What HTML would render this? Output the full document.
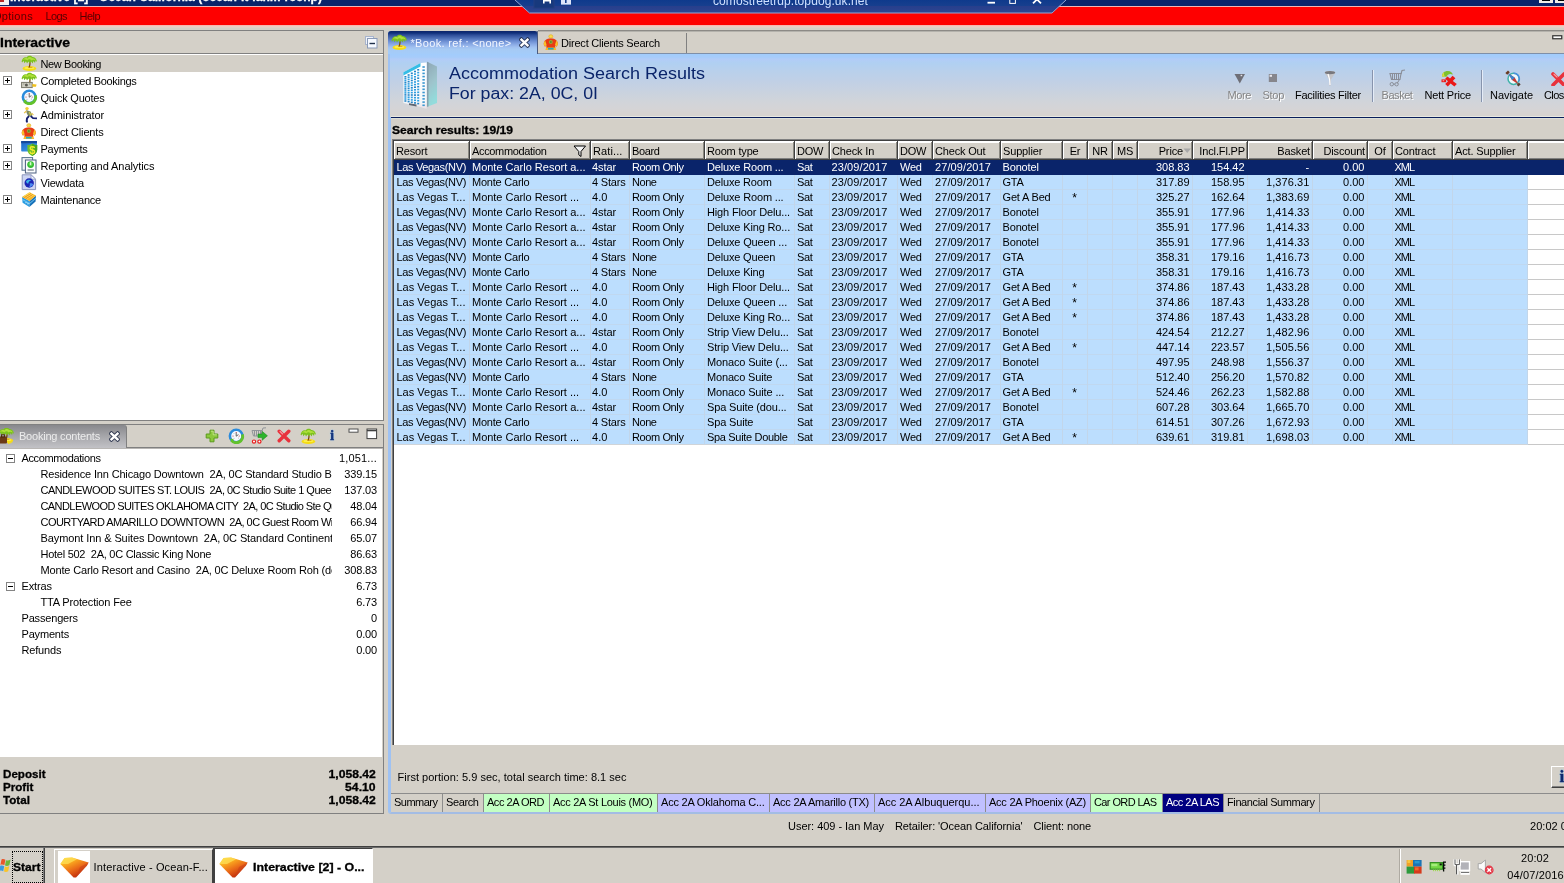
<!DOCTYPE html>
<html><head><meta charset="utf-8"><title>Interactive</title>
<style>
html,body{margin:0;padding:0;}
body{width:1564px;height:883px;overflow:hidden;position:relative;background:#d4d0c8;font-family:"Liberation Sans",sans-serif;font-size:11px;}
div,span.t,svg{position:absolute;}
span.t{white-space:pre;}
#w{left:0;top:0;width:1564px;height:883px;overflow:hidden;will-change:transform;}
div{box-sizing:border-box;}
</style></head><body><div id="w">
<div style="left:0px;top:0px;width:1564px;height:6px;background:#0a246a;"></div>
<div style="left:0px;top:6px;width:1564px;height:1px;background:#f0b4b4;"></div>
<div style="left:0px;top:7px;width:1564px;height:18px;background:#fe0000;"></div>
<div style="left:0px;top:25px;width:1564px;height:1px;background:#f6b8b0;"></div>
<div style="left:0px;top:26px;width:1564px;height:1px;background:#ecccc4;"></div>
<div style="left:0px;top:27px;width:1564px;height:1px;background:#dfd0c8;"></div>
<div style="left:0px;top:0px;width:9px;height:5px;background:#f4f0f0;"></div>
<div style="left:0px;top:0px;width:4px;height:2px;background:#b82828;"></div>
<div style="left:10px;top:0;width:330px;height:5px;overflow:hidden">
<span class="t" style="top:-12.00px;font-size:13px;line-height:17px;color:#fff;font-weight:bold;-webkit-text-stroke:0.3px #fff;left:0px;transform:scaleX(0.9268);transform-origin:0 0;">Interactive [2] - Ocean California (ocean-it-ianm-rconp)</span>
</div>
<div style="left:1539px;top:0px;width:14px;height:3px;background:#f0eee8;"></div>
<div style="left:1542px;top:0px;width:8px;height:1px;background:#000;"></div>
<div style="left:1555px;top:0px;width:9px;height:3px;background:#f0eee8;"></div>
<div style="left:1558px;top:0px;width:6px;height:1px;background:#000;"></div>
<svg style="left:510px;top:0" width="562" height="15" viewBox="0 0 562 15"><defs><linearGradient id="rg" x1="0" y1="0" x2="0" y2="1"><stop offset="0" stop-color="#0f3a8c"/><stop offset="0.45" stop-color="#173f8e"/><stop offset="0.5" stop-color="#283f8c"/><stop offset="1" stop-color="#2c4592"/></linearGradient></defs><path d="M5 0 L19.5 13 L542 13 L556 0Z" fill="url(#rg)"/><path d="M5 0 L19.5 13 L542 13 L556 0" fill="none" stroke="#93a4d4" stroke-width="1"/><rect x="24" y="-2" width="20" height="10" fill="#17397d" stroke="#243f80" stroke-width="1"/><path d="M33 0 h8 v3.5 h-1.6 v-2 h-4.8 v2 h-1.6z" fill="#fff"/><rect x="51" y="0" width="10" height="4.6" fill="#dfe6fa"/><rect x="55" y="0" width="1.6" height="3" fill="#173f8e"/><rect x="477.5" y="1.8" width="7.5" height="1.8" fill="#fff"/><rect x="499.8" y="-2" width="5.6" height="5.4" fill="none" stroke="#fff" stroke-width="1"/><path d="M523 3.4 L527 -0.6 L531 3.4" fill="none" stroke="#fff" stroke-width="1.8"/></svg>
<div style="left:700px;top:0;width:180px;height:12px;overflow:hidden">
<span class="t" style="top:-7.00px;font-size:12px;line-height:16px;color:#cfe0ff;letter-spacing:0.083px;left:13px;">comostreetrdp.topdog.uk.net</span>
</div>
<span class="t" style="top:9.00px;font-size:11px;line-height:14px;color:#560000;letter-spacing:0.297px;left:-7px;">Options</span>
<span class="t" style="top:9.00px;font-size:11px;line-height:14px;color:#560000;letter-spacing:-0.590px;left:45.5px;">Logs</span>
<span class="t" style="top:9.00px;font-size:11px;line-height:14px;color:#560000;letter-spacing:-0.531px;left:79.5px;">Help</span>
<div style="left:0px;top:30px;width:384px;height:1px;background:#808080;"></div>
<div style="left:383px;top:30px;width:1px;height:391px;background:#808080;"></div>
<div style="left:0px;top:53px;width:383px;height:1px;background:#808080;"></div>
<span class="t" style="top:35.00px;font-size:12px;line-height:16px;color:#000;font-weight:bold;-webkit-text-stroke:0.3px #000;left:0px;transform:scaleX(1.1661);transform-origin:0 0;">Interactive</span>
<svg style="left:365px;top:36px;" width="13" height="13" viewBox="0 0 13 13"><rect x="0.5" y="0.5" width="8" height="8" fill="#eef2fa" stroke="#a8b4cc"/><rect x="2.5" y="2.5" width="9.5" height="9.5" fill="#f6f9ff" stroke="#8a9ab8"/><path d="M4.5 7.5 h5.5" stroke="#20304a" stroke-width="1.4"/></svg>
<div style="left:0px;top:54px;width:383px;height:366px;background:#fff;"></div>
<div style="left:0px;top:55px;width:383px;height:17px;background:#d4d0c8;"></div>
<div style="left:0px;top:420px;width:384px;height:1px;background:#808080;"></div>
<svg style="left:21px;top:55px;" width="16" height="16" viewBox="0 0 16 16"><g><ellipse cx="8.4" cy="13.5" rx="6.8" ry="2.4" fill="#f6dc12"/><ellipse cx="8.4" cy="12.9" rx="5" ry="1.2" fill="#fbee4c"/><path d="M7 12.4 h4.4" stroke="#d89a1c" stroke-width="0.9"/><path d="M8.9 6.5 C9.2 8.5 8.9 10.5 8.3 12.2" stroke="#7a4a16" stroke-width="1.3" fill="none"/><path d="M0.6 6.6 C1 4 3 1.8 5.6 2.4 C6.6 0.4 10 0 11.4 2 C13.8 1.6 15.8 4 16 7 L14.6 5.6 L14 8 L12.6 6 L11.6 8.4 L10.2 6.4 L8.8 8.6 L7.4 6.4 L6 8.6 L5 6.2 L3.4 8.2 L2.6 5.8 L1.2 7.4Z" fill="#7cc21c"/><path d="M2 5 C3 3 5 2.6 6.6 3.4 C7.4 1.6 10 1.4 11 3 C12.6 2.8 14 4 14.8 5.6 C13 4.4 11.6 4.4 10.4 5.4 C9.4 4 7.4 4 6.4 5.4 C5 4.4 3.4 4.4 2 5Z" fill="#aede3a"/></g></svg>
<span class="t" style="top:56.50px;font-size:11px;line-height:14px;color:#000;letter-spacing:-0.393px;left:40.5px;">New Booking</span>
<svg style="left:3px;top:76px;" width="9" height="9" viewBox="0 0 9 9"><rect x="0.5" y="0.5" width="8" height="8" fill="#fff" stroke="#848484"/><path d="M2 4.5h5M4.5 2v5" stroke="#000" stroke-width="1"/></svg>
<svg style="left:21px;top:72px;" width="17" height="17" viewBox="0 0 17 17"><path d="M8.9 6.5 C9.2 8.5 8.9 10.5 8.3 12.2" stroke="#7a4a16" stroke-width="1.3" fill="none"/><path d="M0.6 6.6 C1 4 3 1.8 5.6 2.4 C6.6 0.4 10 0 11.4 2 C13.8 1.6 15.8 4 16 7 L14.6 5.6 L14 8 L12.6 6 L11.6 8.4 L10.2 6.4 L8.8 8.6 L7.4 6.4 L6 8.6 L5 6.2 L3.4 8.2 L2.6 5.8 L1.2 7.4Z" fill="#7cc21c"/><path d="M2 5 C3 3 5 2.6 6.6 3.4 C7.4 1.6 10 1.4 11 3 C12.6 2.8 14 4 14.8 5.6 C13 4.4 11.6 4.4 10.4 5.4 C9.4 4 7.4 4 6.4 5.4 C5 4.4 3.4 4.4 2 5Z" fill="#aede3a"/><rect x="0.6" y="10.4" width="10.6" height="5.2" fill="#d0d0c4" stroke="#77776a" stroke-width="1"/><circle cx="5.4" cy="13" r="1.5" fill="#5a5a52"/><path d="M2.2 12 h1.2 M8 12 h1.4" stroke="#77776a" stroke-width="0.8"/><path d="M11.4 12 L15.6 12.6 L15 14.8 L11.4 14.8Z" fill="#f2c21c"/></svg>
<span class="t" style="top:73.50px;font-size:11px;line-height:14px;color:#000;letter-spacing:-0.306px;left:40.5px;">Completed Bookings</span>
<svg style="left:21px;top:89px;" width="17" height="17" viewBox="0 0 17 17"><circle cx="8.2" cy="8" r="6.3" fill="#f6f9ff" stroke="#2b8bdc" stroke-width="2.6"/><path d="M14.4 6.4 A6.4 6.4 0 0 1 3.4 12.4" fill="none" stroke="#62c22c" stroke-width="2.9"/><path d="M2.4 10.6 l3.4 0.6 l-2.6 3z" fill="#62c22c"/><path d="M8.2 8.2 L8.2 4.6 M8.2 8.2 L10.4 6.6" stroke="#555" stroke-width="0.9" fill="none"/><circle cx="5" cy="8" r="0.55" fill="#b33"/><circle cx="11.2" cy="8" r="0.55" fill="#b33"/><circle cx="8.2" cy="4.4" r="0.5" fill="#b33"/><circle cx="6" cy="5.6" r="0.45" fill="#888"/><circle cx="10.4" cy="10" r="0.45" fill="#888"/><circle cx="6" cy="10.2" r="0.45" fill="#888"/></svg>
<span class="t" style="top:90.50px;font-size:11px;line-height:14px;color:#000;letter-spacing:-0.220px;left:40.5px;">Quick Quotes</span>
<svg style="left:3px;top:110px;" width="9" height="9" viewBox="0 0 9 9"><rect x="0.5" y="0.5" width="8" height="8" fill="#fff" stroke="#848484"/><path d="M2 4.5h5M4.5 2v5" stroke="#000" stroke-width="1"/></svg>
<svg style="left:21px;top:106px;" width="17" height="17" viewBox="0 0 17 17"><circle cx="6" cy="2.6" r="1.7" fill="#f2cc3a"/><path d="M5.2 4 L9.6 5.4 L11.4 9.6 L7.4 10.6 L5.6 7Z" fill="#7f8a62"/><path d="M8.6 5.6 L11 9.4 L9.4 9.8 L7.6 6.4Z" fill="#c9c24a"/><path d="M5.4 5 L3.2 7.2" stroke="#e8c040" stroke-width="1.2"/><path d="M10.6 7.2 L12.4 8.8" stroke="#e8c040" stroke-width="1.1"/><path d="M8 10 L6 12.4 L5.6 15.6" stroke="#16206e" stroke-width="1.9" fill="none" stroke-linejoin="round"/><path d="M5 15.6 h1.8" stroke="#16206e" stroke-width="1.6"/><path d="M9.6 10 L12 12.2 L16 12.4" stroke="#16206e" stroke-width="1.7" fill="none" stroke-linejoin="round"/></svg>
<span class="t" style="top:107.50px;font-size:11px;line-height:14px;color:#000;letter-spacing:-0.100px;left:40.5px;">Administrator</span>
<svg style="left:21px;top:123px;" width="17" height="17" viewBox="0 0 17 17"><ellipse cx="7.8" cy="2.4" rx="2" ry="1.7" fill="#f8dc4a" stroke="#e8b02a" stroke-width="0.7"/><path d="M0.8 10.4 C0.6 6.2 3.6 4.4 7.8 4.4 C12 4.4 15 6.2 14.8 10.4 L13.6 12.8 L12.2 11.2 L12.2 14.2 L3.4 14.2 L3.4 11.2 L2 12.8Z" fill="#e83c14"/><path d="M0.8 10.4 C0.7 8.6 1.2 7.4 2.2 6.4 L3.6 10.8 L2 12.8Z M14.8 10.4 C14.9 8.6 14.4 7.4 13.4 6.4 L12 10.8 L13.6 12.8Z" fill="#f8c02a"/><circle cx="7.8" cy="8" r="2" fill="#98a83a"/><circle cx="7.8" cy="8" r="1" fill="#5a8a2a"/><path d="M3.2 13.6 h9.2 l0.8 2.4 h-10.8z" fill="#f8b82a"/><rect x="5" y="13.8" width="5.6" height="1.8" fill="#26a8c0"/></svg>
<span class="t" style="top:124.50px;font-size:11px;line-height:14px;color:#000;letter-spacing:-0.172px;left:40.5px;">Direct Clients</span>
<svg style="left:3px;top:144px;" width="9" height="9" viewBox="0 0 9 9"><rect x="0.5" y="0.5" width="8" height="8" fill="#fff" stroke="#848484"/><path d="M2 4.5h5M4.5 2v5" stroke="#000" stroke-width="1"/></svg>
<svg style="left:21px;top:140px;" width="17" height="17" viewBox="0 0 17 17"><defs><linearGradient id="pg" x1="0" y1="0" x2="1" y2="1"><stop offset="0" stop-color="#1a62c4"/><stop offset="1" stop-color="#44a8f0"/></linearGradient></defs><rect x="0.2" y="1" width="15.8" height="10.6" rx="0.8" fill="url(#pg)"/><rect x="0.2" y="1" width="15.8" height="2.2" fill="#154a9c"/><path d="M11.2 3.4 C12.6 4.6 14.4 5 16.2 5 L16.2 10 C16 13 13.6 15 11.2 16 C8.8 15 6.6 13 6.4 10 L6.4 5 C8.2 5 9.8 4.6 11.2 3.4Z" fill="#6cc02c"/><path d="M11.2 3.4 C12.6 4.6 14.4 5 16.2 5 L16.2 10 C16 13 13.6 15 11.2 16Z" fill="#4aa420"/><text x="11.3" y="13.8" font-family="Liberation Sans" font-weight="bold" font-size="11" fill="#f4ec2a" text-anchor="middle">$</text></svg>
<span class="t" style="top:141.50px;font-size:11px;line-height:14px;color:#000;letter-spacing:-0.240px;left:40.5px;">Payments</span>
<svg style="left:3px;top:161px;" width="9" height="9" viewBox="0 0 9 9"><rect x="0.5" y="0.5" width="8" height="8" fill="#fff" stroke="#848484"/><path d="M2 4.5h5M4.5 2v5" stroke="#000" stroke-width="1"/></svg>
<svg style="left:21px;top:157px;" width="17" height="17" viewBox="0 0 17 17"><rect x="1" y="0.6" width="10.6" height="12.6" fill="#f2f5f8" stroke="#52708a" stroke-width="1"/><rect x="4.4" y="3" width="10.6" height="13" fill="#fbfdfd" stroke="#4a5e80" stroke-width="1"/><circle cx="9.6" cy="7.6" r="3.4" fill="#34bc34"/><circle cx="9.6" cy="7" r="2" fill="#6ade5a"/><path d="M9.6 5.2 v2.8" stroke="#f0fff0" stroke-width="0.9"/><path d="M6.6 13 h6.2" stroke="#3a4a5a" stroke-width="0.9"/></svg>
<span class="t" style="top:158.50px;font-size:11px;line-height:14px;color:#000;letter-spacing:-0.069px;left:40.5px;">Reporting and Analytics</span>
<svg style="left:21px;top:174px;" width="17" height="17" viewBox="0 0 17 17"><path d="M1.2 0.8 L10 0.8 L14.6 5.2 L14.6 15.6 L1.2 15.6Z" fill="#cdd5f2" stroke="#8a96bc" stroke-width="1"/><path d="M10 0.8 L10 5.2 L14.6 5.2Z" fill="#f2f5ff" stroke="#8a96bc" stroke-width="0.8"/><circle cx="8.2" cy="9" r="4.7" fill="#1c26b4"/><path d="M5 7.4 C6 5.6 8.6 5 10.4 6.4 C9 6.4 7.4 7.6 7.4 9.6 C6.2 9.4 5.2 8.6 5 7.4Z" fill="#3ab4e8"/><path d="M8.6 9.6 C10 9 11.6 9.4 12.2 10.6 C11.4 12.4 9.6 13.2 8 12.8 C9 12 9.2 10.8 8.6 9.6Z" fill="#4a8af0"/></svg>
<span class="t" style="top:175.50px;font-size:11px;line-height:14px;color:#000;letter-spacing:-0.195px;left:40.5px;">Viewdata</span>
<svg style="left:3px;top:195px;" width="9" height="9" viewBox="0 0 9 9"><rect x="0.5" y="0.5" width="8" height="8" fill="#fff" stroke="#848484"/><path d="M2 4.5h5M4.5 2v5" stroke="#000" stroke-width="1"/></svg>
<svg style="left:21px;top:191px;" width="17" height="17" viewBox="0 0 17 17"><path d="M1 6 L8.6 10 L8.4 16 L1.6 11.8Z" fill="#2a9ce0"/><path d="M8.6 10 L15 4.6 L14.6 10.4 L8.4 16Z" fill="#1670b8"/><path d="M1 6 L8.4 1.2 L15 4.6 L8.6 10Z" fill="#f6b42a"/><path d="M2.8 5.6 L9.4 1.8 M4.4 6.6 L11 2.8 M6.2 7.6 L12.8 3.8" stroke="#fbe45a" stroke-width="1"/><path d="M3.4 6.6 L10 2.6 M5.2 7.6 L11.8 3.6" stroke="#e8841c" stroke-width="0.7"/><path d="M1.2 8.4 L8.6 12.6 L14.8 7.2" stroke="#7cd0f8" stroke-width="0.9" fill="none"/><circle cx="5" cy="11.6" r="0.7" fill="#d8f0ff"/><circle cx="7" cy="12.8" r="0.7" fill="#d8f0ff"/></svg>
<span class="t" style="top:192.50px;font-size:11px;line-height:14px;color:#000;letter-spacing:-0.227px;left:40.5px;">Maintenance</span>
<div style="left:0px;top:424px;width:384px;height:1px;background:#808080;"></div>
<div style="left:383px;top:424px;width:1px;height:390px;background:#808080;"></div>
<div style="left:0px;top:447px;width:383px;height:1px;background:#808080;"></div>
<div style="left:0;top:425px;width:127px;height:24px;background:linear-gradient(#88888c,#a8a8ac 50%,#c4c4c8);border-right:1px solid #808080;border-radius:0 3px 0 0"></div>
<svg style="left:-3px;top:428px;" width="18" height="17" viewBox="0 0 18 17"><g transform="translate(1,-1)"><g><ellipse cx="8.4" cy="13.5" rx="6.8" ry="2.4" fill="#f6dc12"/><ellipse cx="8.4" cy="12.9" rx="5" ry="1.2" fill="#fbee4c"/><path d="M7 12.4 h4.4" stroke="#d89a1c" stroke-width="0.9"/><path d="M8.9 6.5 C9.2 8.5 8.9 10.5 8.3 12.2" stroke="#7a4a16" stroke-width="1.3" fill="none"/><path d="M0.6 6.6 C1 4 3 1.8 5.6 2.4 C6.6 0.4 10 0 11.4 2 C13.8 1.6 15.8 4 16 7 L14.6 5.6 L14 8 L12.6 6 L11.6 8.4 L10.2 6.4 L8.8 8.6 L7.4 6.4 L6 8.6 L5 6.2 L3.4 8.2 L2.6 5.8 L1.2 7.4Z" fill="#7cc21c"/><path d="M2 5 C3 3 5 2.6 6.6 3.4 C7.4 1.6 10 1.4 11 3 C12.6 2.8 14 4 14.8 5.6 C13 4.4 11.6 4.4 10.4 5.4 C9.4 4 7.4 4 6.4 5.4 C5 4.4 3.4 4.4 2 5Z" fill="#aede3a"/></g></g><rect x="2" y="8.5" width="8" height="7" rx="1" fill="#6b3a16"/><rect x="4.5" y="6.8" width="3" height="2.2" fill="none" stroke="#4a2408" stroke-width="0.9"/><path d="M11 14 L16 14.5 L11 16.2Z" fill="#f6dc1c"/></svg>
<span class="t" style="top:429.00px;font-size:11px;line-height:14px;color:#ececec;letter-spacing:-0.212px;left:19px;">Booking contents</span>
<svg style="left:109px;top:431px;" width="11" height="11" viewBox="0 0 11 11"><path d="M0.9 1.1 L10.1 9.9 M10.1 1.1 L0.9 9.9" stroke="#1a2440" stroke-width="4.2" stroke-linecap="butt" opacity="0.8"/><path d="M1.6 1.8 L9.4 9.2 M9.4 1.8 L1.6 9.2" stroke="#fff" stroke-width="2.4" stroke-linecap="butt"/></svg>
<svg style="left:205px;top:429px;" width="14" height="14" viewBox="0 0 14 14"><path d="M5 1.2 h4 v3.8 h3.8 v4 h-3.8 v3.8 h-4 v-3.8 h-3.8 v-4 h3.8z" fill="#8cc83c" stroke="#5a9a1c" stroke-width="1"/><path d="M5.8 2.2 h2.4 v3.6 h3.6" fill="none" stroke="#c4e88a" stroke-width="0.9"/></svg>
<svg style="left:228px;top:428px;" width="17" height="17" viewBox="0 0 17 17"><circle cx="8.2" cy="8" r="6.3" fill="#f6f9ff" stroke="#2b8bdc" stroke-width="2.6"/><path d="M14.4 6.4 A6.4 6.4 0 0 1 3.4 12.4" fill="none" stroke="#62c22c" stroke-width="2.9"/><path d="M2.4 10.6 l3.4 0.6 l-2.6 3z" fill="#62c22c"/><path d="M8.2 8.2 L8.2 4.6 M8.2 8.2 L10.4 6.6" stroke="#555" stroke-width="0.9" fill="none"/><circle cx="5" cy="8" r="0.55" fill="#b33"/><circle cx="11.2" cy="8" r="0.55" fill="#b33"/><circle cx="8.2" cy="4.4" r="0.5" fill="#b33"/><circle cx="6" cy="5.6" r="0.45" fill="#888"/><circle cx="10.4" cy="10" r="0.45" fill="#888"/><circle cx="6" cy="10.2" r="0.45" fill="#888"/></svg>
<svg style="left:251px;top:427px;" width="18" height="18" viewBox="0 0 18 18"><path d="M1 3.5 L11 3.5 L10 9 L2.5 9Z" fill="none" stroke="#909498" stroke-width="1"/><path d="M3.5 3.5 v5.5 M5.5 3.5 v5.5 M7.5 3.5 v5.5 M9.5 3.5 v5.5" stroke="#909498" stroke-width="1"/><path d="M11 4 L12 1 L15 0.8" fill="none" stroke="#909498" stroke-width="1"/><path d="M7 7 h4.2 v-2.6 l5.2 4.4 l-5.2 4.4 v-2.6 h-4.2z" fill="#2cb42c" stroke="#1c8a1c" stroke-width="0.6"/><circle cx="3" cy="14.6" r="1.6" fill="#fff" stroke="#e81c1c" stroke-width="1.2"/><circle cx="8.4" cy="14.6" r="1.6" fill="#fff" stroke="#e81c1c" stroke-width="1.2"/></svg>
<svg style="left:277px;top:429px;" width="14" height="14" viewBox="0 0 14 14"><path d="M2.2 2.2 L11.8 11.8 M11.8 2.2 L2.2 11.8" stroke="#e8323c" stroke-width="3.4" stroke-linecap="round"/><path d="M3 2.4 L5.6 5" stroke="#f8a0a8" stroke-width="1.1" stroke-linecap="round"/></svg>
<svg style="left:300px;top:428px;" width="16" height="16" viewBox="0 0 16 16"><g><ellipse cx="8.4" cy="13.5" rx="6.8" ry="2.4" fill="#f6dc12"/><ellipse cx="8.4" cy="12.9" rx="5" ry="1.2" fill="#fbee4c"/><path d="M7 12.4 h4.4" stroke="#d89a1c" stroke-width="0.9"/><path d="M8.9 6.5 C9.2 8.5 8.9 10.5 8.3 12.2" stroke="#7a4a16" stroke-width="1.3" fill="none"/><path d="M0.6 6.6 C1 4 3 1.8 5.6 2.4 C6.6 0.4 10 0 11.4 2 C13.8 1.6 15.8 4 16 7 L14.6 5.6 L14 8 L12.6 6 L11.6 8.4 L10.2 6.4 L8.8 8.6 L7.4 6.4 L6 8.6 L5 6.2 L3.4 8.2 L2.6 5.8 L1.2 7.4Z" fill="#7cc21c"/><path d="M2 5 C3 3 5 2.6 6.6 3.4 C7.4 1.6 10 1.4 11 3 C12.6 2.8 14 4 14.8 5.6 C13 4.4 11.6 4.4 10.4 5.4 C9.4 4 7.4 4 6.4 5.4 C5 4.4 3.4 4.4 2 5Z" fill="#aede3a"/></g></svg>
<span class="t" style="top:426.00px;font-size:15px;line-height:19px;color:#16357c;font-weight:bold;-webkit-text-stroke:0.3px #16357c;font-family:'Liberation Serif',serif;left:329.91px;transform:scaleX(1.0000);transform-origin:50% 0;text-shadow:0 0 2px #a8d4ff,0 0 1px #a8d4ff;">i</span>
<svg style="left:348px;top:428px;" width="12" height="6" viewBox="0 0 12 6"><rect x="1" y="1" width="9" height="3.2" fill="#fff" stroke="#505050" stroke-width="1"/></svg>
<svg style="left:366px;top:428px;" width="12" height="12" viewBox="0 0 12 12"><rect x="1" y="1" width="9.6" height="9.6" fill="#fff" stroke="#404040" stroke-width="1"/><path d="M1 2.6 h9.6" stroke="#404040" stroke-width="1.4"/></svg>
<div style="left:0px;top:448px;width:383px;height:1px;background:#b8b6b4;"></div>
<div style="left:0px;top:449px;width:382px;height:308px;background:#fff;"></div>
<svg style="left:6px;top:454px;" width="9" height="9" viewBox="0 0 9 9"><rect x="0.5" y="0.5" width="8" height="8" fill="#fff" stroke="#848484"/><path d="M2 4.5h5" stroke="#000" stroke-width="1"/></svg>
<span class="t" style="top:451.00px;font-size:11px;line-height:14px;color:#000;letter-spacing:-0.384px;left:21.5px;">Accommodations</span>
<span class="t" style="top:451.00px;font-size:11px;line-height:14px;color:#000;letter-spacing:0.162px;left:339.00px;">1,051...</span>
<div style="left:40px;top:466px;width:291.5px;height:16px;overflow:hidden">
<span class="t" style="top:1.00px;font-size:11px;line-height:14px;color:#000;letter-spacing:-0.161px;left:0.5px;">Residence Inn Chicago Downtown  2A, 0C Standard Studio B</span>
</div>
<span class="t" style="top:467.00px;font-size:11px;line-height:14px;color:#000;letter-spacing:-0.168px;left:344.35px;">339.15</span>
<div style="left:40px;top:482px;width:291.5px;height:16px;overflow:hidden">
<span class="t" style="top:1.00px;font-size:11px;line-height:14px;color:#000;letter-spacing:-0.517px;left:0.5px;">CANDLEWOOD SUITES ST. LOUIS  2A, 0C Studio Suite 1 Queen</span>
</div>
<span class="t" style="top:483.00px;font-size:11px;line-height:14px;color:#000;letter-spacing:-0.168px;left:344.35px;">137.03</span>
<div style="left:40px;top:498px;width:291.5px;height:16px;overflow:hidden">
<span class="t" style="top:1.00px;font-size:11px;line-height:14px;color:#000;letter-spacing:-0.580px;left:0.5px;">CANDLEWOOD SUITES OKLAHOMA CITY  2A, 0C Studio Ste Que</span>
</div>
<span class="t" style="top:499.00px;font-size:11px;line-height:14px;color:#000;letter-spacing:-0.165px;left:350.29px;">48.04</span>
<div style="left:40px;top:514px;width:291.5px;height:16px;overflow:hidden">
<span class="t" style="top:1.00px;font-size:11px;line-height:14px;color:#000;letter-spacing:-0.534px;left:0.5px;">COURTYARD AMARILLO DOWNTOWN  2A, 0C Guest Room Wit</span>
</div>
<span class="t" style="top:515.00px;font-size:11px;line-height:14px;color:#000;letter-spacing:-0.165px;left:350.29px;">66.94</span>
<div style="left:40px;top:530px;width:291.5px;height:16px;overflow:hidden">
<span class="t" style="top:1.00px;font-size:11px;line-height:14px;color:#000;letter-spacing:-0.095px;left:0.5px;">Baymont Inn &amp; Suites Downtown  2A, 0C Standard Continental</span>
</div>
<span class="t" style="top:531.00px;font-size:11px;line-height:14px;color:#000;letter-spacing:-0.165px;left:350.29px;">65.07</span>
<div style="left:40px;top:546px;width:291.5px;height:16px;overflow:hidden">
<span class="t" style="top:1.00px;font-size:11px;line-height:14px;color:#000;letter-spacing:-0.262px;left:0.5px;">Hotel 502  2A, 0C Classic King None</span>
</div>
<span class="t" style="top:547.00px;font-size:11px;line-height:14px;color:#000;letter-spacing:-0.165px;left:350.29px;">86.63</span>
<div style="left:40px;top:562px;width:291.5px;height:16px;overflow:hidden">
<span class="t" style="top:1.00px;font-size:11px;line-height:14px;color:#000;letter-spacing:-0.161px;left:0.5px;">Monte Carlo Resort and Casino  2A, 0C Deluxe Room Roh (do</span>
</div>
<span class="t" style="top:563.00px;font-size:11px;line-height:14px;color:#000;letter-spacing:-0.168px;left:344.35px;">308.83</span>
<svg style="left:6px;top:582px;" width="9" height="9" viewBox="0 0 9 9"><rect x="0.5" y="0.5" width="8" height="8" fill="#fff" stroke="#848484"/><path d="M2 4.5h5" stroke="#000" stroke-width="1"/></svg>
<span class="t" style="top:579.00px;font-size:11px;line-height:14px;color:#000;letter-spacing:-0.156px;left:21.5px;">Extras</span>
<span class="t" style="top:579.00px;font-size:11px;line-height:14px;color:#000;letter-spacing:-0.161px;left:356.22px;">6.73</span>
<div style="left:40px;top:594px;width:291.5px;height:16px;overflow:hidden">
<span class="t" style="top:1.00px;font-size:11px;line-height:14px;color:#000;letter-spacing:-0.157px;left:0.5px;">TTA Protection Fee</span>
</div>
<span class="t" style="top:595.00px;font-size:11px;line-height:14px;color:#000;letter-spacing:-0.161px;left:356.22px;">6.73</span>
<span class="t" style="top:611.00px;font-size:11px;line-height:14px;color:#000;letter-spacing:-0.174px;left:21.5px;">Passengers</span>
<span class="t" style="top:611.00px;font-size:11px;line-height:14px;color:#000;letter-spacing:-0.184px;left:371.06px;">0</span>
<span class="t" style="top:627.00px;font-size:11px;line-height:14px;color:#000;letter-spacing:-0.183px;left:21.5px;">Payments</span>
<span class="t" style="top:627.00px;font-size:11px;line-height:14px;color:#000;letter-spacing:-0.161px;left:356.22px;">0.00</span>
<span class="t" style="top:643.00px;font-size:11px;line-height:14px;color:#000;letter-spacing:-0.176px;left:21.5px;">Refunds</span>
<span class="t" style="top:643.00px;font-size:11px;line-height:14px;color:#000;letter-spacing:-0.161px;left:356.22px;">0.00</span>
<span class="t" style="top:767.00px;font-size:11px;line-height:14px;color:#000;font-weight:bold;-webkit-text-stroke:0.3px #000;left:2.5px;transform:scaleX(1.0550);transform-origin:0 0;">Deposit</span>
<span class="t" style="top:767.00px;font-size:11px;line-height:14px;color:#000;font-weight:bold;-webkit-text-stroke:0.3px #000;left:332.67px;transform:scaleX(1.1050);transform-origin:100% 0;">1,058.42</span>
<span class="t" style="top:780.00px;font-size:11px;line-height:14px;color:#000;font-weight:bold;-webkit-text-stroke:0.3px #000;left:2.5px;transform:scaleX(1.0550);transform-origin:0 0;">Profit</span>
<span class="t" style="top:780.00px;font-size:11px;line-height:14px;color:#000;font-weight:bold;-webkit-text-stroke:0.3px #000;left:347.97px;transform:scaleX(1.1050);transform-origin:100% 0;">54.10</span>
<span class="t" style="top:793.00px;font-size:11px;line-height:14px;color:#000;font-weight:bold;-webkit-text-stroke:0.3px #000;left:2.5px;transform:scaleX(1.0550);transform-origin:0 0;">Total</span>
<span class="t" style="top:793.00px;font-size:11px;line-height:14px;color:#000;font-weight:bold;-webkit-text-stroke:0.3px #000;left:332.67px;transform:scaleX(1.1050);transform-origin:100% 0;">1,058.42</span>
<div style="left:0px;top:813px;width:384px;height:1px;background:#808080;"></div>
<div style="left:388px;top:31px;width:1176px;height:783px;border:2px solid #9fc2f3;border-left-width:3px;border-right:none;border-top:none;border-bottom-color:#a3bce4;border-radius:3px 0 0 3px;"></div>
<div style="left:538px;top:30px;width:1026px;height:1px;background:#8c8a86;"></div>
<div style="left:538px;top:31px;width:1026px;height:1px;background:#b4b2ac;"></div>
<div style="left:537px;top:31px;width:1px;height:22px;background:#6a7890;"></div>
<div style="left:390px;top:53px;width:1174px;height:1px;background:#7f8fa8;"></div>
<div style="left:388px;top:31px;width:150px;height:23px;background:linear-gradient(#0c2468 0%,#10307c 9%,#2c4c98 17%,#4a6cb4 30%,#6a8cd0 43%,#88a8e4 57%,#a0c0f0 70%,#a6caf4 80%,#a4ccfa 100%);border-radius:3px 3px 0 0;border-right:1px solid #4a5a80"></div>
<svg style="left:391px;top:33.5px;" width="16" height="16" viewBox="0 0 16 16"><g><ellipse cx="8.4" cy="13.5" rx="6.8" ry="2.4" fill="#f6dc12"/><ellipse cx="8.4" cy="12.9" rx="5" ry="1.2" fill="#fbee4c"/><path d="M7 12.4 h4.4" stroke="#d89a1c" stroke-width="0.9"/><path d="M8.9 6.5 C9.2 8.5 8.9 10.5 8.3 12.2" stroke="#7a4a16" stroke-width="1.3" fill="none"/><path d="M0.6 6.6 C1 4 3 1.8 5.6 2.4 C6.6 0.4 10 0 11.4 2 C13.8 1.6 15.8 4 16 7 L14.6 5.6 L14 8 L12.6 6 L11.6 8.4 L10.2 6.4 L8.8 8.6 L7.4 6.4 L6 8.6 L5 6.2 L3.4 8.2 L2.6 5.8 L1.2 7.4Z" fill="#7cc21c"/><path d="M2 5 C3 3 5 2.6 6.6 3.4 C7.4 1.6 10 1.4 11 3 C12.6 2.8 14 4 14.8 5.6 C13 4.4 11.6 4.4 10.4 5.4 C9.4 4 7.4 4 6.4 5.4 C5 4.4 3.4 4.4 2 5Z" fill="#aede3a"/></g></svg>
<span class="t" style="top:36.00px;font-size:11px;line-height:14px;color:#f2f6ff;letter-spacing:0.326px;left:410.5px;">*Book. ref.: &lt;none&gt;</span>
<svg style="left:519px;top:37px;" width="11" height="11" viewBox="0 0 11 11"><path d="M0.9 1.1 L10.1 9.9 M10.1 1.1 L0.9 9.9" stroke="#1a2440" stroke-width="4.2" stroke-linecap="butt" opacity="0.8"/><path d="M1.6 1.8 L9.4 9.2 M9.4 1.8 L1.6 9.2" stroke="#fff" stroke-width="2.4" stroke-linecap="butt"/></svg>
<div style="left:686px;top:33px;width:1px;height:20px;background:#808080;"></div>
<svg style="left:543px;top:34px;" width="17" height="17" viewBox="0 0 17 17"><ellipse cx="7.8" cy="2.4" rx="2" ry="1.7" fill="#f8dc4a" stroke="#e8b02a" stroke-width="0.7"/><path d="M0.8 10.4 C0.6 6.2 3.6 4.4 7.8 4.4 C12 4.4 15 6.2 14.8 10.4 L13.6 12.8 L12.2 11.2 L12.2 14.2 L3.4 14.2 L3.4 11.2 L2 12.8Z" fill="#e83c14"/><path d="M0.8 10.4 C0.7 8.6 1.2 7.4 2.2 6.4 L3.6 10.8 L2 12.8Z M14.8 10.4 C14.9 8.6 14.4 7.4 13.4 6.4 L12 10.8 L13.6 12.8Z" fill="#f8c02a"/><circle cx="7.8" cy="8" r="2" fill="#98a83a"/><circle cx="7.8" cy="8" r="1" fill="#5a8a2a"/><path d="M3.2 13.6 h9.2 l0.8 2.4 h-10.8z" fill="#f8b82a"/><rect x="5" y="13.8" width="5.6" height="1.8" fill="#26a8c0"/></svg>
<span class="t" style="top:36.00px;font-size:11px;line-height:14px;color:#000;letter-spacing:-0.206px;left:561px;">Direct Clients Search</span>
<svg style="left:1552px;top:35px;" width="11" height="5" viewBox="0 0 11 5"><rect x="0.75" y="0.75" width="9" height="3" fill="#fff" stroke="#303030" stroke-width="1.2"/></svg>
<div style="left:390px;top:54px;width:1174px;height:63px;background:linear-gradient(#a2ccfc 0%,#a6ccfa 5%,#b2ccf8 8%,#b0d0f2 14%,#b8d0ec 26%,#c0d0e6 42%,#c8d2e0 58%,#d0d4da 74%,#d5d4d6 87%,#d6d3d0 96%)"></div>
<svg style="left:401px;top:60px;" width="38" height="52" viewBox="0 0 38 52"><defs><linearGradient id="bg1" x1="0" y1="0" x2="0.25" y2="1"><stop offset="0" stop-color="#8ea6b4"/><stop offset="0.55" stop-color="#9ec4cc"/><stop offset="1" stop-color="#92dcdc"/></linearGradient><linearGradient id="bg2" x1="0" y1="0" x2="0" y2="1"><stop offset="0" stop-color="#fff"/><stop offset="0.85" stop-color="#f4f8fb"/><stop offset="1" stop-color="#e8dde2"/></linearGradient></defs><path d="M2.4 12.3 L19.5 3 L25.6 2.4 L25.6 49 L19.5 47 L2.4 43Z" fill="url(#bg2)"/><path d="M26.2 1.8 L36 6.4 L36 43 L26.2 46.8Z" fill="url(#bg1)"/><path d="M26.2 1.8 L27.4 2.4 L27.4 46.4 L26.2 46.8Z" fill="#7d97a6"/><path d="M2.4 12.3 L19.5 3 L19.5 6.4 L2.4 15.6Z" fill="#36bde6"/><rect x="3.4" y="16.0" width="2" height="1.6" fill="#2686c8"/><rect x="3.4" y="18.0" width="2" height="1.6" fill="#2f9fe0"/><rect x="3.4" y="20.0" width="2" height="1.6" fill="#2f9fe0"/><rect x="3.4" y="22.0" width="2" height="1.6" fill="#2686c8"/><rect x="3.4" y="24.0" width="2" height="1.6" fill="#2f9fe0"/><rect x="3.4" y="26.1" width="2" height="1.6" fill="#2f9fe0"/><rect x="3.4" y="28.1" width="2" height="1.6" fill="#2686c8"/><rect x="3.4" y="30.1" width="2" height="1.6" fill="#2f9fe0"/><rect x="3.4" y="32.1" width="2" height="1.6" fill="#2f9fe0"/><rect x="3.4" y="34.1" width="2" height="1.6" fill="#2686c8"/><rect x="3.4" y="36.2" width="2" height="1.6" fill="#2f9fe0"/><rect x="3.4" y="38.2" width="2" height="1.6" fill="#2f9fe0"/><rect x="3.4" y="40.2" width="2" height="1.6" fill="#2686c8"/><rect x="6.6" y="14.2" width="2" height="1.6" fill="#2686c8"/><rect x="6.6" y="16.4" width="2" height="1.6" fill="#2f9fe0"/><rect x="6.6" y="18.6" width="2" height="1.6" fill="#2f9fe0"/><rect x="6.6" y="20.9" width="2" height="1.6" fill="#2686c8"/><rect x="6.6" y="23.1" width="2" height="1.6" fill="#2f9fe0"/><rect x="6.6" y="25.3" width="2" height="1.6" fill="#2f9fe0"/><rect x="6.6" y="27.5" width="2" height="1.6" fill="#2686c8"/><rect x="6.6" y="29.7" width="2" height="1.6" fill="#2f9fe0"/><rect x="6.6" y="32.0" width="2" height="1.6" fill="#2f9fe0"/><rect x="6.6" y="34.2" width="2" height="1.6" fill="#2686c8"/><rect x="6.6" y="36.4" width="2" height="1.6" fill="#2f9fe0"/><rect x="6.6" y="38.6" width="2" height="1.6" fill="#2f9fe0"/><rect x="6.6" y="40.8" width="2" height="1.6" fill="#2686c8"/><rect x="9.8" y="12.5" width="2" height="1.6" fill="#2686c8"/><rect x="9.8" y="14.9" width="2" height="1.6" fill="#2f9fe0"/><rect x="9.8" y="17.3" width="2" height="1.6" fill="#2f9fe0"/><rect x="9.8" y="19.7" width="2" height="1.6" fill="#2686c8"/><rect x="9.8" y="22.1" width="2" height="1.6" fill="#2f9fe0"/><rect x="9.8" y="24.6" width="2" height="1.6" fill="#2f9fe0"/><rect x="9.8" y="27.0" width="2" height="1.6" fill="#2686c8"/><rect x="9.8" y="29.4" width="2" height="1.6" fill="#2f9fe0"/><rect x="9.8" y="31.8" width="2" height="1.6" fill="#2f9fe0"/><rect x="9.8" y="34.2" width="2" height="1.6" fill="#2686c8"/><rect x="9.8" y="36.6" width="2" height="1.6" fill="#2f9fe0"/><rect x="9.8" y="39.1" width="2" height="1.6" fill="#2f9fe0"/><rect x="9.8" y="41.5" width="2" height="1.6" fill="#2686c8"/><rect x="13.0" y="10.7" width="2" height="1.6" fill="#2686c8"/><rect x="13.0" y="13.3" width="2" height="1.6" fill="#2f9fe0"/><rect x="13.0" y="16.0" width="2" height="1.6" fill="#2f9fe0"/><rect x="13.0" y="18.6" width="2" height="1.6" fill="#2686c8"/><rect x="13.0" y="21.2" width="2" height="1.6" fill="#2f9fe0"/><rect x="13.0" y="23.8" width="2" height="1.6" fill="#2f9fe0"/><rect x="13.0" y="26.4" width="2" height="1.6" fill="#2686c8"/><rect x="13.0" y="29.0" width="2" height="1.6" fill="#2f9fe0"/><rect x="13.0" y="31.7" width="2" height="1.6" fill="#2f9fe0"/><rect x="13.0" y="34.3" width="2" height="1.6" fill="#2686c8"/><rect x="13.0" y="36.9" width="2" height="1.6" fill="#2f9fe0"/><rect x="13.0" y="39.5" width="2" height="1.6" fill="#2f9fe0"/><rect x="13.0" y="42.1" width="2" height="1.6" fill="#2686c8"/><rect x="16.2" y="9.0" width="2" height="1.6" fill="#2686c8"/><rect x="16.2" y="11.8" width="2" height="1.6" fill="#2f9fe0"/><rect x="16.2" y="14.6" width="2" height="1.6" fill="#2f9fe0"/><rect x="16.2" y="17.4" width="2" height="1.6" fill="#2686c8"/><rect x="16.2" y="20.2" width="2" height="1.6" fill="#2f9fe0"/><rect x="16.2" y="23.1" width="2" height="1.6" fill="#2f9fe0"/><rect x="16.2" y="25.9" width="2" height="1.6" fill="#2686c8"/><rect x="16.2" y="28.7" width="2" height="1.6" fill="#2f9fe0"/><rect x="16.2" y="31.5" width="2" height="1.6" fill="#2f9fe0"/><rect x="16.2" y="34.3" width="2" height="1.6" fill="#2686c8"/><rect x="16.2" y="37.1" width="2" height="1.6" fill="#2f9fe0"/><rect x="16.2" y="39.9" width="2" height="1.6" fill="#2f9fe0"/><rect x="16.2" y="42.8" width="2" height="1.6" fill="#2686c8"/><rect x="21.4" y="6.2" width="2.4" height="1.6" fill="#3a96d0"/><rect x="21.4" y="9.4" width="2.4" height="1.6" fill="#3a96d0"/><rect x="21.4" y="12.6" width="2.4" height="1.6" fill="#3a96d0"/><rect x="21.4" y="15.8" width="2.4" height="1.6" fill="#3a96d0"/><rect x="21.4" y="19.0" width="2.4" height="1.6" fill="#3a96d0"/><rect x="21.4" y="22.2" width="2.4" height="1.6" fill="#3a96d0"/><rect x="21.4" y="25.3" width="2.4" height="1.6" fill="#3a96d0"/><rect x="21.4" y="28.5" width="2.4" height="1.6" fill="#3a96d0"/><rect x="21.4" y="31.7" width="2.4" height="1.6" fill="#3a96d0"/><rect x="21.4" y="34.9" width="2.4" height="1.6" fill="#3a96d0"/><rect x="21.4" y="38.1" width="2.4" height="1.6" fill="#3a96d0"/><rect x="21.4" y="41.3" width="2.4" height="1.6" fill="#3a96d0"/><rect x="21.4" y="44.5" width="2.4" height="1.6" fill="#3a96d0"/><path d="M8 43.2 L15.5 44.6 L15.5 46.6 L8 45Z" fill="#5c6470"/></svg>
<span class="t" style="top:64.00px;font-size:16px;line-height:19px;color:#0a246a;left:449px;transform:scaleX(1.1245);transform-origin:0 0;">Accommodation Search Results</span>
<span class="t" style="top:84.00px;font-size:16px;line-height:19px;color:#0a246a;left:449px;transform:scaleX(1.1096);transform-origin:0 0;">For pax: 2A, 0C, 0I</span>
<svg style="left:1234px;top:73px;" width="12" height="11" viewBox="0 0 12 11"><path d="M0.5 1 L11 1 L5.8 10.5Z" fill="#6e6e76"/><rect x="6.6" y="1.8" width="1.6" height="1.4" fill="#e4e4ea"/></svg>
<span class="t" style="top:88.50px;font-size:11px;line-height:14px;color:#fff;letter-spacing:-0.391px;left:1228.5px;">More</span>
<span class="t" style="top:87.50px;font-size:11px;line-height:14px;color:#848484;letter-spacing:-0.391px;left:1227.5px;">More</span>
<svg style="left:1268px;top:73px;" width="10" height="10" viewBox="0 0 10 10"><rect x="0.8" y="1" width="8.2" height="8" fill="#86868c"/><rect x="1.6" y="1.8" width="2.4" height="2" fill="#e8e8ee"/></svg>
<span class="t" style="top:88.50px;font-size:11px;line-height:14px;color:#fff;letter-spacing:-0.285px;left:1263.5px;">Stop</span>
<span class="t" style="top:87.50px;font-size:11px;line-height:14px;color:#848484;letter-spacing:-0.285px;left:1262.5px;">Stop</span>
<svg style="left:1323px;top:70px;" width="14" height="17" viewBox="0 0 14 17"><path d="M1.5 2.5 C3 0.6 11 0.6 12.5 2.5 L8 9.5 L7.4 16 L6.4 16 L6 9.5Z" fill="#c4c4c8"/><ellipse cx="7" cy="2.6" rx="5.2" ry="1.6" fill="#77777d"/><path d="M5 4 L6.6 9.5 L7 15" stroke="#fff" stroke-width="1.2" fill="none"/></svg>
<span class="t" style="top:87.50px;font-size:11px;line-height:14px;color:#000;letter-spacing:-0.253px;left:1295px;">Facilities Filter</span>
<div style="left:1372px;top:70px;width:1px;height:32px;background:#8794ad;"></div>
<div style="left:1373px;top:70px;width:1px;height:32px;background:#e4ecf8;"></div>
<svg style="left:1389px;top:69px;" width="17" height="18" viewBox="0 0 17 18"><path d="M1 4.5 L12 4.5 L11 10.5 L2.5 10.5Z" fill="none" stroke="#8a8e98" stroke-width="1.1"/><path d="M3.5 4.5 v6 M5.5 4.5 v6 M7.5 4.5 v6 M9.5 4.5 v6" stroke="#8a8e98" stroke-width="1"/><path d="M12 5 L13 1.5 L16 1" fill="none" stroke="#8a8e98" stroke-width="1.1"/><path d="M10.5 10.5 L8 14.5" stroke="#8a8e98" stroke-width="1"/><circle cx="2.8" cy="15.2" r="1.7" fill="none" stroke="#8a8e98" stroke-width="1"/><circle cx="7.6" cy="15.2" r="1.7" fill="none" stroke="#8a8e98" stroke-width="1"/><path d="M4.5 15.2 h1.5" stroke="#8a8e98"/></svg>
<span class="t" style="top:88.50px;font-size:11px;line-height:14px;color:#fff;letter-spacing:-0.440px;left:1382.5px;">Basket</span>
<span class="t" style="top:87.50px;font-size:11px;line-height:14px;color:#848484;letter-spacing:-0.440px;left:1381.5px;">Basket</span>
<svg style="left:1441px;top:69px;" width="17" height="18" viewBox="0 0 17 18"><path d="M1 7.6 C0.8 3.8 4 1.7 7 2 C9.6 2.2 11.6 3.6 11.7 5.8 C9.6 4.6 6.6 4.8 5.6 7.8Z" fill="#7cc030"/><path d="M1 7.6 C0.9 5.6 1.8 4 3.2 3 C2.8 4.6 3 6.2 4 7.8Z" fill="#d6d83c"/><path d="M6.4 7.4 l2.6 2.2 l2.6 -2.8 l2.8 2.4 l-2.6 2.8 l4 3 l-2.4 2.6 l-3.8 -3 l-2.8 2.8 l-2.6 -2.4 l2.8 -2.8 l-2.8 -2.4z" fill="#ea1818"/><rect x="0.5" y="10.4" width="4.6" height="2.8" fill="#ea1818"/><rect x="1.6" y="11.4" width="1.6" height="0.8" fill="#f8d0d0"/></svg>
<span class="t" style="top:87.50px;font-size:11px;line-height:14px;color:#000;letter-spacing:-0.180px;left:1424.5px;">Nett Price</span>
<div style="left:1481px;top:70px;width:1px;height:32px;background:#8794ad;"></div>
<div style="left:1482px;top:70px;width:1px;height:32px;background:#e4ecf8;"></div>
<svg style="left:1504px;top:69px;" width="18" height="18" viewBox="0 0 18 18"><circle cx="9.6" cy="9.8" r="5.6" fill="#f0f8fc" stroke="#3fb2a8" stroke-width="1.5"/><path d="M9.6 4.2 A5.6 5.6 0 0 1 14.6 12.4" fill="none" stroke="#4a90e0" stroke-width="1.5"/><path d="M4 4 L10.8 8.8 L14.6 15.6 L8 11Z" fill="#c43a32"/><path d="M4 4 L10.8 8.8 L8 11Z" fill="#3a86d0"/><path d="M1.4 4 L4 1.4 L5.8 3.2 L3.2 5.8Z" fill="#6a3a22"/><path d="M12.8 15.8 l2.2 -2.2 l1.6 2 l-2.2 1.8z" fill="#54402e"/></svg>
<span class="t" style="top:87.50px;font-size:11px;line-height:14px;color:#000;letter-spacing:-0.053px;left:1490px;">Navigate</span>
<svg style="left:1551px;top:72px;" width="14" height="14" viewBox="0 0 14 14"><path d="M2 2 L13 13 M13 2 L2 13" stroke="#e8323c" stroke-width="3.6" stroke-linecap="round"/><path d="M3 2.2 L6 5" stroke="#f8a0a0" stroke-width="1.2" stroke-linecap="round"/></svg>
<span class="t" style="top:87.50px;font-size:11px;line-height:14px;color:#000;letter-spacing:-0.625px;left:1544px;">Close</span>
<div style="left:391px;top:116px;width:1173px;height:1px;background:#e8e8e0;"></div>
<div style="left:391px;top:117px;width:1173px;height:1px;background:#0a1e5a;"></div>
<div style="left:391px;top:118px;width:1173px;height:1px;background:#dcdfd8;"></div>
<span class="t" style="top:122.50px;font-size:11px;line-height:14px;color:#000;font-weight:bold;-webkit-text-stroke:0.3px #000;left:391.5px;transform:scaleX(1.0992);transform-origin:0 0;">Search results: 19/19</span>
<div style="left:392px;top:139px;width:1172px;height:606px;background:#fff;border-left:1px solid #808080;border-top:1px solid #808080;"></div>
<div style="left:393px;top:140px;width:1171px;height:605px;border-left:1px solid #404040;border-top:1px solid #404040;"></div>
<div style="left:394px;top:141px;width:1170px;height:19px;background:#d4d0c8;border-bottom:1px solid #404040;"></div>
<div style="left:394px;top:158px;width:1170px;height:1px;background:#808080;"></div>
<div style="left:394px;top:141px;width:1170px;height:2px;background:#fff;"></div>
<div style="left:394px;top:141px;width:1px;height:18px;background:#fff;"></div>
<div style="left:468px;top:142px;width:1px;height:17px;background:#8a8880;"></div>
<div style="left:469px;top:141px;width:1px;height:19px;background:#404040;"></div>
<div style="left:470px;top:141px;width:1px;height:18px;background:#fff;"></div>
<div style="left:589px;top:142px;width:1px;height:17px;background:#8a8880;"></div>
<div style="left:590px;top:141px;width:1px;height:19px;background:#404040;"></div>
<div style="left:591px;top:141px;width:1px;height:18px;background:#fff;"></div>
<div style="left:628px;top:142px;width:1px;height:17px;background:#8a8880;"></div>
<div style="left:629px;top:141px;width:1px;height:19px;background:#404040;"></div>
<div style="left:630px;top:141px;width:1px;height:18px;background:#fff;"></div>
<div style="left:703px;top:142px;width:1px;height:17px;background:#8a8880;"></div>
<div style="left:704px;top:141px;width:1px;height:19px;background:#404040;"></div>
<div style="left:705px;top:141px;width:1px;height:18px;background:#fff;"></div>
<div style="left:793px;top:142px;width:1px;height:17px;background:#8a8880;"></div>
<div style="left:794px;top:141px;width:1px;height:19px;background:#404040;"></div>
<div style="left:795px;top:141px;width:1px;height:18px;background:#fff;"></div>
<div style="left:828px;top:142px;width:1px;height:17px;background:#8a8880;"></div>
<div style="left:829px;top:141px;width:1px;height:19px;background:#404040;"></div>
<div style="left:830px;top:141px;width:1px;height:18px;background:#fff;"></div>
<div style="left:896px;top:142px;width:1px;height:17px;background:#8a8880;"></div>
<div style="left:897px;top:141px;width:1px;height:19px;background:#404040;"></div>
<div style="left:898px;top:141px;width:1px;height:18px;background:#fff;"></div>
<div style="left:931px;top:142px;width:1px;height:17px;background:#8a8880;"></div>
<div style="left:932px;top:141px;width:1px;height:19px;background:#404040;"></div>
<div style="left:933px;top:141px;width:1px;height:18px;background:#fff;"></div>
<div style="left:999px;top:142px;width:1px;height:17px;background:#8a8880;"></div>
<div style="left:1000px;top:141px;width:1px;height:19px;background:#404040;"></div>
<div style="left:1001px;top:141px;width:1px;height:18px;background:#fff;"></div>
<div style="left:1061px;top:142px;width:1px;height:17px;background:#8a8880;"></div>
<div style="left:1062px;top:141px;width:1px;height:19px;background:#404040;"></div>
<div style="left:1063px;top:141px;width:1px;height:18px;background:#fff;"></div>
<div style="left:1086px;top:142px;width:1px;height:17px;background:#8a8880;"></div>
<div style="left:1087px;top:141px;width:1px;height:19px;background:#404040;"></div>
<div style="left:1088px;top:141px;width:1px;height:18px;background:#fff;"></div>
<div style="left:1111px;top:142px;width:1px;height:17px;background:#8a8880;"></div>
<div style="left:1112px;top:141px;width:1px;height:19px;background:#404040;"></div>
<div style="left:1113px;top:141px;width:1px;height:18px;background:#fff;"></div>
<div style="left:1136px;top:142px;width:1px;height:17px;background:#8a8880;"></div>
<div style="left:1137px;top:141px;width:1px;height:19px;background:#404040;"></div>
<div style="left:1138px;top:141px;width:1px;height:18px;background:#fff;"></div>
<div style="left:1191px;top:142px;width:1px;height:17px;background:#8a8880;"></div>
<div style="left:1192px;top:141px;width:1px;height:19px;background:#404040;"></div>
<div style="left:1193px;top:141px;width:1px;height:18px;background:#fff;"></div>
<div style="left:1246px;top:142px;width:1px;height:17px;background:#8a8880;"></div>
<div style="left:1247px;top:141px;width:1px;height:19px;background:#404040;"></div>
<div style="left:1248px;top:141px;width:1px;height:18px;background:#fff;"></div>
<div style="left:1311px;top:142px;width:1px;height:17px;background:#8a8880;"></div>
<div style="left:1312px;top:141px;width:1px;height:19px;background:#404040;"></div>
<div style="left:1313px;top:141px;width:1px;height:18px;background:#fff;"></div>
<div style="left:1366px;top:142px;width:1px;height:17px;background:#8a8880;"></div>
<div style="left:1367px;top:141px;width:1px;height:19px;background:#404040;"></div>
<div style="left:1368px;top:141px;width:1px;height:18px;background:#fff;"></div>
<div style="left:1391px;top:142px;width:1px;height:17px;background:#8a8880;"></div>
<div style="left:1392px;top:141px;width:1px;height:19px;background:#404040;"></div>
<div style="left:1393px;top:141px;width:1px;height:18px;background:#fff;"></div>
<div style="left:1451px;top:142px;width:1px;height:17px;background:#8a8880;"></div>
<div style="left:1452px;top:141px;width:1px;height:19px;background:#404040;"></div>
<div style="left:1453px;top:141px;width:1px;height:18px;background:#fff;"></div>
<div style="left:1526px;top:142px;width:1px;height:17px;background:#8a8880;"></div>
<div style="left:1527px;top:141px;width:1px;height:19px;background:#404040;"></div>
<div style="left:1528px;top:141px;width:1px;height:18px;background:#fff;"></div>
<span class="t" style="top:144.00px;font-size:11px;line-height:14px;color:#000;letter-spacing:-0.151px;left:396px;">Resort</span>
<span class="t" style="top:144.00px;font-size:11px;line-height:14px;color:#000;letter-spacing:-0.337px;left:472px;">Accommodation</span>
<span class="t" style="top:144.00px;font-size:11px;line-height:14px;color:#000;letter-spacing:0.109px;left:593px;">Rati...</span>
<span class="t" style="top:144.00px;font-size:11px;line-height:14px;color:#000;letter-spacing:-0.372px;left:632px;">Board</span>
<span class="t" style="top:144.00px;font-size:11px;line-height:14px;color:#000;letter-spacing:-0.189px;left:707px;">Room type</span>
<span class="t" style="top:144.00px;font-size:11px;line-height:14px;color:#000;letter-spacing:-0.269px;left:797px;">DOW</span>
<span class="t" style="top:144.00px;font-size:11px;line-height:14px;color:#000;letter-spacing:-0.163px;left:832px;">Check In</span>
<span class="t" style="top:144.00px;font-size:11px;line-height:14px;color:#000;letter-spacing:-0.269px;left:900px;">DOW</span>
<span class="t" style="top:144.00px;font-size:11px;line-height:14px;color:#000;letter-spacing:-0.173px;left:935px;">Check Out</span>
<span class="t" style="top:144.00px;font-size:11px;line-height:14px;color:#000;letter-spacing:-0.151px;left:1003px;">Supplier</span>
<span class="t" style="top:144.00px;font-size:11px;line-height:14px;color:#000;letter-spacing:-0.165px;left:1069.66px;">Er</span>
<span class="t" style="top:144.00px;font-size:11px;line-height:14px;color:#000;letter-spacing:-0.238px;left:1092.29px;">NR</span>
<span class="t" style="top:144.00px;font-size:11px;line-height:14px;color:#000;letter-spacing:-0.248px;left:1117.00px;">MS</span>
<span class="t" style="top:144.00px;font-size:11px;line-height:14px;color:#000;letter-spacing:-0.150px;left:1158.69px;">Price</span>
<span class="t" style="top:144.00px;font-size:11px;line-height:14px;color:#000;letter-spacing:-0.141px;left:1199.33px;">Incl.Fl.PP</span>
<span class="t" style="top:144.00px;font-size:11px;line-height:14px;color:#000;letter-spacing:-0.168px;left:1277.37px;">Basket</span>
<span class="t" style="top:144.00px;font-size:11px;line-height:14px;color:#000;letter-spacing:-0.160px;left:1323.49px;">Discount</span>
<span class="t" style="top:144.00px;font-size:11px;line-height:14px;color:#000;letter-spacing:-0.174px;left:1374.36px;">Of</span>
<span class="t" style="top:144.00px;font-size:11px;line-height:14px;color:#000;letter-spacing:-0.156px;left:1395px;">Contract</span>
<span class="t" style="top:144.00px;font-size:11px;line-height:14px;color:#000;letter-spacing:-0.144px;left:1455px;">Act. Supplier</span>
<svg style="left:573px;top:145px;" width="14" height="13" viewBox="0 0 14 13"><path d="M1 1 L12.5 1 L8 6.5 L8 11.5 L5.8 9.8 L5.8 6.5Z" fill="#f4f4f4" stroke="#000" stroke-width="1"/></svg>
<svg style="left:1183px;top:148px;" width="9" height="6" viewBox="0 0 9 6"><path d="M0.5 0.5 L8 0.5 L4.2 5Z" fill="#a8a8a8"/></svg>
<div style="left:394px;top:160px;width:1170px;height:15px;background:#0a246a;"></div>
<span class="t" style="top:160.00px;font-size:11px;line-height:14px;color:#fff;letter-spacing:-0.345px;left:396.5px;">Las Vegas(NV)</span>
<span class="t" style="top:160.00px;font-size:11px;line-height:14px;color:#fff;letter-spacing:-0.010px;left:472px;">Monte Carlo Resort a...</span>
<span class="t" style="top:160.00px;font-size:11px;line-height:14px;color:#fff;letter-spacing:-0.094px;left:592px;">4star</span>
<span class="t" style="top:160.00px;font-size:11px;line-height:14px;color:#fff;letter-spacing:-0.392px;left:632px;">Room Only</span>
<span class="t" style="top:160.00px;font-size:11px;line-height:14px;color:#fff;letter-spacing:-0.158px;left:707px;">Deluxe Room ...</span>
<span class="t" style="top:160.00px;font-size:11px;line-height:14px;color:#fff;letter-spacing:-0.339px;left:797px;">Sat</span>
<span class="t" style="top:160.00px;font-size:11px;line-height:14px;color:#fff;letter-spacing:0.094px;left:831.5px;">23/09/2017</span>
<span class="t" style="top:160.00px;font-size:11px;line-height:14px;color:#fff;letter-spacing:-0.307px;left:900px;">Wed</span>
<span class="t" style="top:160.00px;font-size:11px;line-height:14px;color:#fff;letter-spacing:0.094px;left:935px;">27/09/2017</span>
<span class="t" style="top:160.00px;font-size:11px;line-height:14px;color:#fff;letter-spacing:-0.160px;left:1002.5px;">Bonotel</span>
<span class="t" style="top:160.00px;font-size:11px;line-height:14px;color:#fff;letter-spacing:-0.026px;left:1156.00px;">308.83</span>
<span class="t" style="top:160.00px;font-size:11px;line-height:14px;color:#fff;letter-spacing:-0.026px;left:1211.00px;">154.42</span>
<span class="t" style="top:160.00px;font-size:11px;line-height:14px;color:#fff;letter-spacing:-0.110px;left:1305.44px;">-</span>
<span class="t" style="top:160.00px;font-size:11px;line-height:14px;color:#fff;letter-spacing:0.020px;left:1343.00px;">0.00</span>
<span class="t" style="top:160.00px;font-size:11px;line-height:14px;color:#fff;letter-spacing:-1.042px;left:1394.5px;">XML</span>
<div style="left:394px;top:175px;width:1134px;height:15px;background:#bcdefe;"></div>
<div style="left:394px;top:189px;width:1134px;height:1px;background:#c0d8f0;"></div>
<div style="left:1528px;top:189px;width:36px;height:1px;background:#c8c8c8;"></div>
<div style="left:469px;top:175px;width:1px;height:15px;background:#c2d6ea;"></div>
<div style="left:590px;top:175px;width:1px;height:15px;background:#c2d6ea;"></div>
<div style="left:629px;top:175px;width:1px;height:15px;background:#c2d6ea;"></div>
<div style="left:704px;top:175px;width:1px;height:15px;background:#c2d6ea;"></div>
<div style="left:794px;top:175px;width:1px;height:15px;background:#c2d6ea;"></div>
<div style="left:829px;top:175px;width:1px;height:15px;background:#c2d6ea;"></div>
<div style="left:897px;top:175px;width:1px;height:15px;background:#c2d6ea;"></div>
<div style="left:932px;top:175px;width:1px;height:15px;background:#c2d6ea;"></div>
<div style="left:1000px;top:175px;width:1px;height:15px;background:#c2d6ea;"></div>
<div style="left:1062px;top:175px;width:1px;height:15px;background:#c2d6ea;"></div>
<div style="left:1087px;top:175px;width:1px;height:15px;background:#c2d6ea;"></div>
<div style="left:1112px;top:175px;width:1px;height:15px;background:#c2d6ea;"></div>
<div style="left:1137px;top:175px;width:1px;height:15px;background:#c2d6ea;"></div>
<div style="left:1192px;top:175px;width:1px;height:15px;background:#c2d6ea;"></div>
<div style="left:1247px;top:175px;width:1px;height:15px;background:#c2d6ea;"></div>
<div style="left:1312px;top:175px;width:1px;height:15px;background:#c2d6ea;"></div>
<div style="left:1367px;top:175px;width:1px;height:15px;background:#c2d6ea;"></div>
<div style="left:1392px;top:175px;width:1px;height:15px;background:#c2d6ea;"></div>
<div style="left:1452px;top:175px;width:1px;height:15px;background:#c2d6ea;"></div>
<div style="left:1527px;top:175px;width:1px;height:15px;background:#c2d6ea;"></div>
<span class="t" style="top:175.00px;font-size:11px;line-height:14px;color:#000;letter-spacing:-0.345px;left:396.5px;">Las Vegas(NV)</span>
<span class="t" style="top:175.00px;font-size:11px;line-height:14px;color:#000;letter-spacing:-0.220px;left:472px;">Monte Carlo</span>
<span class="t" style="top:175.00px;font-size:11px;line-height:14px;color:#000;letter-spacing:-0.194px;left:592px;">4 Stars</span>
<span class="t" style="top:175.00px;font-size:11px;line-height:14px;color:#000;letter-spacing:-0.449px;left:632px;">None</span>
<span class="t" style="top:175.00px;font-size:11px;line-height:14px;color:#000;letter-spacing:-0.182px;left:707px;">Deluxe Room</span>
<span class="t" style="top:175.00px;font-size:11px;line-height:14px;color:#000;letter-spacing:-0.339px;left:797px;">Sat</span>
<span class="t" style="top:175.00px;font-size:11px;line-height:14px;color:#000;letter-spacing:0.094px;left:831.5px;">23/09/2017</span>
<span class="t" style="top:175.00px;font-size:11px;line-height:14px;color:#000;letter-spacing:-0.307px;left:900px;">Wed</span>
<span class="t" style="top:175.00px;font-size:11px;line-height:14px;color:#000;letter-spacing:0.094px;left:935px;">27/09/2017</span>
<span class="t" style="top:175.00px;font-size:11px;line-height:14px;color:#000;letter-spacing:-0.218px;left:1002.5px;">GTA</span>
<span class="t" style="top:175.00px;font-size:11px;line-height:14px;color:#000;letter-spacing:-0.026px;left:1156.00px;">317.89</span>
<span class="t" style="top:175.00px;font-size:11px;line-height:14px;color:#000;letter-spacing:-0.026px;left:1211.00px;">158.95</span>
<span class="t" style="top:175.00px;font-size:11px;line-height:14px;color:#000;letter-spacing:0.084px;left:1266.00px;">1,376.31</span>
<span class="t" style="top:175.00px;font-size:11px;line-height:14px;color:#000;letter-spacing:0.020px;left:1343.00px;">0.00</span>
<span class="t" style="top:175.00px;font-size:11px;line-height:14px;color:#000;letter-spacing:-1.042px;left:1394.5px;">XML</span>
<div style="left:394px;top:190px;width:1134px;height:15px;background:#bcdefe;"></div>
<div style="left:394px;top:204px;width:1134px;height:1px;background:#c0d8f0;"></div>
<div style="left:1528px;top:204px;width:36px;height:1px;background:#c8c8c8;"></div>
<div style="left:469px;top:190px;width:1px;height:15px;background:#c2d6ea;"></div>
<div style="left:590px;top:190px;width:1px;height:15px;background:#c2d6ea;"></div>
<div style="left:629px;top:190px;width:1px;height:15px;background:#c2d6ea;"></div>
<div style="left:704px;top:190px;width:1px;height:15px;background:#c2d6ea;"></div>
<div style="left:794px;top:190px;width:1px;height:15px;background:#c2d6ea;"></div>
<div style="left:829px;top:190px;width:1px;height:15px;background:#c2d6ea;"></div>
<div style="left:897px;top:190px;width:1px;height:15px;background:#c2d6ea;"></div>
<div style="left:932px;top:190px;width:1px;height:15px;background:#c2d6ea;"></div>
<div style="left:1000px;top:190px;width:1px;height:15px;background:#c2d6ea;"></div>
<div style="left:1062px;top:190px;width:1px;height:15px;background:#c2d6ea;"></div>
<div style="left:1087px;top:190px;width:1px;height:15px;background:#c2d6ea;"></div>
<div style="left:1112px;top:190px;width:1px;height:15px;background:#c2d6ea;"></div>
<div style="left:1137px;top:190px;width:1px;height:15px;background:#c2d6ea;"></div>
<div style="left:1192px;top:190px;width:1px;height:15px;background:#c2d6ea;"></div>
<div style="left:1247px;top:190px;width:1px;height:15px;background:#c2d6ea;"></div>
<div style="left:1312px;top:190px;width:1px;height:15px;background:#c2d6ea;"></div>
<div style="left:1367px;top:190px;width:1px;height:15px;background:#c2d6ea;"></div>
<div style="left:1392px;top:190px;width:1px;height:15px;background:#c2d6ea;"></div>
<div style="left:1452px;top:190px;width:1px;height:15px;background:#c2d6ea;"></div>
<div style="left:1527px;top:190px;width:1px;height:15px;background:#c2d6ea;"></div>
<span class="t" style="top:190.00px;font-size:11px;line-height:14px;color:#000;letter-spacing:0.007px;left:396.5px;">Las Vegas T...</span>
<span class="t" style="top:190.00px;font-size:11px;line-height:14px;color:#000;letter-spacing:-0.027px;left:472px;">Monte Carlo Resort ...</span>
<span class="t" style="top:190.00px;font-size:11px;line-height:14px;color:#000;letter-spacing:0.068px;left:592px;">4.0</span>
<span class="t" style="top:190.00px;font-size:11px;line-height:14px;color:#000;letter-spacing:-0.392px;left:632px;">Room Only</span>
<span class="t" style="top:190.00px;font-size:11px;line-height:14px;color:#000;letter-spacing:-0.158px;left:707px;">Deluxe Room ...</span>
<span class="t" style="top:190.00px;font-size:11px;line-height:14px;color:#000;letter-spacing:-0.339px;left:797px;">Sat</span>
<span class="t" style="top:190.00px;font-size:11px;line-height:14px;color:#000;letter-spacing:0.094px;left:831.5px;">23/09/2017</span>
<span class="t" style="top:190.00px;font-size:11px;line-height:14px;color:#000;letter-spacing:-0.307px;left:900px;">Wed</span>
<span class="t" style="top:190.00px;font-size:11px;line-height:14px;color:#000;letter-spacing:0.094px;left:935px;">27/09/2017</span>
<span class="t" style="top:190.00px;font-size:11px;line-height:14px;color:#000;letter-spacing:-0.165px;left:1002.5px;">Get A Bed</span>
<span class="t" style="top:190.00px;font-size:12px;line-height:16px;color:#000;letter-spacing:-0.140px;left:1072.23px;">*</span>
<span class="t" style="top:190.00px;font-size:11px;line-height:14px;color:#000;letter-spacing:-0.026px;left:1156.00px;">325.27</span>
<span class="t" style="top:190.00px;font-size:11px;line-height:14px;color:#000;letter-spacing:-0.026px;left:1211.00px;">162.64</span>
<span class="t" style="top:190.00px;font-size:11px;line-height:14px;color:#000;letter-spacing:0.084px;left:1266.00px;">1,383.69</span>
<span class="t" style="top:190.00px;font-size:11px;line-height:14px;color:#000;letter-spacing:0.020px;left:1343.00px;">0.00</span>
<span class="t" style="top:190.00px;font-size:11px;line-height:14px;color:#000;letter-spacing:-1.042px;left:1394.5px;">XML</span>
<div style="left:394px;top:205px;width:1134px;height:15px;background:#bcdefe;"></div>
<div style="left:394px;top:219px;width:1134px;height:1px;background:#c0d8f0;"></div>
<div style="left:1528px;top:219px;width:36px;height:1px;background:#c8c8c8;"></div>
<div style="left:469px;top:205px;width:1px;height:15px;background:#c2d6ea;"></div>
<div style="left:590px;top:205px;width:1px;height:15px;background:#c2d6ea;"></div>
<div style="left:629px;top:205px;width:1px;height:15px;background:#c2d6ea;"></div>
<div style="left:704px;top:205px;width:1px;height:15px;background:#c2d6ea;"></div>
<div style="left:794px;top:205px;width:1px;height:15px;background:#c2d6ea;"></div>
<div style="left:829px;top:205px;width:1px;height:15px;background:#c2d6ea;"></div>
<div style="left:897px;top:205px;width:1px;height:15px;background:#c2d6ea;"></div>
<div style="left:932px;top:205px;width:1px;height:15px;background:#c2d6ea;"></div>
<div style="left:1000px;top:205px;width:1px;height:15px;background:#c2d6ea;"></div>
<div style="left:1062px;top:205px;width:1px;height:15px;background:#c2d6ea;"></div>
<div style="left:1087px;top:205px;width:1px;height:15px;background:#c2d6ea;"></div>
<div style="left:1112px;top:205px;width:1px;height:15px;background:#c2d6ea;"></div>
<div style="left:1137px;top:205px;width:1px;height:15px;background:#c2d6ea;"></div>
<div style="left:1192px;top:205px;width:1px;height:15px;background:#c2d6ea;"></div>
<div style="left:1247px;top:205px;width:1px;height:15px;background:#c2d6ea;"></div>
<div style="left:1312px;top:205px;width:1px;height:15px;background:#c2d6ea;"></div>
<div style="left:1367px;top:205px;width:1px;height:15px;background:#c2d6ea;"></div>
<div style="left:1392px;top:205px;width:1px;height:15px;background:#c2d6ea;"></div>
<div style="left:1452px;top:205px;width:1px;height:15px;background:#c2d6ea;"></div>
<div style="left:1527px;top:205px;width:1px;height:15px;background:#c2d6ea;"></div>
<span class="t" style="top:205.00px;font-size:11px;line-height:14px;color:#000;letter-spacing:-0.345px;left:396.5px;">Las Vegas(NV)</span>
<span class="t" style="top:205.00px;font-size:11px;line-height:14px;color:#000;letter-spacing:-0.010px;left:472px;">Monte Carlo Resort a...</span>
<span class="t" style="top:205.00px;font-size:11px;line-height:14px;color:#000;letter-spacing:-0.094px;left:592px;">4star</span>
<span class="t" style="top:205.00px;font-size:11px;line-height:14px;color:#000;letter-spacing:-0.392px;left:632px;">Room Only</span>
<span class="t" style="top:205.00px;font-size:11px;line-height:14px;color:#000;letter-spacing:-0.143px;left:707px;">High Floor Delu...</span>
<span class="t" style="top:205.00px;font-size:11px;line-height:14px;color:#000;letter-spacing:-0.339px;left:797px;">Sat</span>
<span class="t" style="top:205.00px;font-size:11px;line-height:14px;color:#000;letter-spacing:0.094px;left:831.5px;">23/09/2017</span>
<span class="t" style="top:205.00px;font-size:11px;line-height:14px;color:#000;letter-spacing:-0.307px;left:900px;">Wed</span>
<span class="t" style="top:205.00px;font-size:11px;line-height:14px;color:#000;letter-spacing:0.094px;left:935px;">27/09/2017</span>
<span class="t" style="top:205.00px;font-size:11px;line-height:14px;color:#000;letter-spacing:-0.160px;left:1002.5px;">Bonotel</span>
<span class="t" style="top:205.00px;font-size:11px;line-height:14px;color:#000;letter-spacing:-0.026px;left:1156.00px;">355.91</span>
<span class="t" style="top:205.00px;font-size:11px;line-height:14px;color:#000;letter-spacing:-0.026px;left:1211.00px;">177.96</span>
<span class="t" style="top:205.00px;font-size:11px;line-height:14px;color:#000;letter-spacing:0.084px;left:1266.00px;">1,414.33</span>
<span class="t" style="top:205.00px;font-size:11px;line-height:14px;color:#000;letter-spacing:0.020px;left:1343.00px;">0.00</span>
<span class="t" style="top:205.00px;font-size:11px;line-height:14px;color:#000;letter-spacing:-1.042px;left:1394.5px;">XML</span>
<div style="left:394px;top:220px;width:1134px;height:15px;background:#bcdefe;"></div>
<div style="left:394px;top:234px;width:1134px;height:1px;background:#c0d8f0;"></div>
<div style="left:1528px;top:234px;width:36px;height:1px;background:#c8c8c8;"></div>
<div style="left:469px;top:220px;width:1px;height:15px;background:#c2d6ea;"></div>
<div style="left:590px;top:220px;width:1px;height:15px;background:#c2d6ea;"></div>
<div style="left:629px;top:220px;width:1px;height:15px;background:#c2d6ea;"></div>
<div style="left:704px;top:220px;width:1px;height:15px;background:#c2d6ea;"></div>
<div style="left:794px;top:220px;width:1px;height:15px;background:#c2d6ea;"></div>
<div style="left:829px;top:220px;width:1px;height:15px;background:#c2d6ea;"></div>
<div style="left:897px;top:220px;width:1px;height:15px;background:#c2d6ea;"></div>
<div style="left:932px;top:220px;width:1px;height:15px;background:#c2d6ea;"></div>
<div style="left:1000px;top:220px;width:1px;height:15px;background:#c2d6ea;"></div>
<div style="left:1062px;top:220px;width:1px;height:15px;background:#c2d6ea;"></div>
<div style="left:1087px;top:220px;width:1px;height:15px;background:#c2d6ea;"></div>
<div style="left:1112px;top:220px;width:1px;height:15px;background:#c2d6ea;"></div>
<div style="left:1137px;top:220px;width:1px;height:15px;background:#c2d6ea;"></div>
<div style="left:1192px;top:220px;width:1px;height:15px;background:#c2d6ea;"></div>
<div style="left:1247px;top:220px;width:1px;height:15px;background:#c2d6ea;"></div>
<div style="left:1312px;top:220px;width:1px;height:15px;background:#c2d6ea;"></div>
<div style="left:1367px;top:220px;width:1px;height:15px;background:#c2d6ea;"></div>
<div style="left:1392px;top:220px;width:1px;height:15px;background:#c2d6ea;"></div>
<div style="left:1452px;top:220px;width:1px;height:15px;background:#c2d6ea;"></div>
<div style="left:1527px;top:220px;width:1px;height:15px;background:#c2d6ea;"></div>
<span class="t" style="top:220.00px;font-size:11px;line-height:14px;color:#000;letter-spacing:-0.345px;left:396.5px;">Las Vegas(NV)</span>
<span class="t" style="top:220.00px;font-size:11px;line-height:14px;color:#000;letter-spacing:-0.010px;left:472px;">Monte Carlo Resort a...</span>
<span class="t" style="top:220.00px;font-size:11px;line-height:14px;color:#000;letter-spacing:-0.094px;left:592px;">4star</span>
<span class="t" style="top:220.00px;font-size:11px;line-height:14px;color:#000;letter-spacing:-0.392px;left:632px;">Room Only</span>
<span class="t" style="top:220.00px;font-size:11px;line-height:14px;color:#000;letter-spacing:-0.151px;left:707px;">Deluxe King Ro...</span>
<span class="t" style="top:220.00px;font-size:11px;line-height:14px;color:#000;letter-spacing:-0.339px;left:797px;">Sat</span>
<span class="t" style="top:220.00px;font-size:11px;line-height:14px;color:#000;letter-spacing:0.094px;left:831.5px;">23/09/2017</span>
<span class="t" style="top:220.00px;font-size:11px;line-height:14px;color:#000;letter-spacing:-0.307px;left:900px;">Wed</span>
<span class="t" style="top:220.00px;font-size:11px;line-height:14px;color:#000;letter-spacing:0.094px;left:935px;">27/09/2017</span>
<span class="t" style="top:220.00px;font-size:11px;line-height:14px;color:#000;letter-spacing:-0.160px;left:1002.5px;">Bonotel</span>
<span class="t" style="top:220.00px;font-size:11px;line-height:14px;color:#000;letter-spacing:-0.026px;left:1156.00px;">355.91</span>
<span class="t" style="top:220.00px;font-size:11px;line-height:14px;color:#000;letter-spacing:-0.026px;left:1211.00px;">177.96</span>
<span class="t" style="top:220.00px;font-size:11px;line-height:14px;color:#000;letter-spacing:0.084px;left:1266.00px;">1,414.33</span>
<span class="t" style="top:220.00px;font-size:11px;line-height:14px;color:#000;letter-spacing:0.020px;left:1343.00px;">0.00</span>
<span class="t" style="top:220.00px;font-size:11px;line-height:14px;color:#000;letter-spacing:-1.042px;left:1394.5px;">XML</span>
<div style="left:394px;top:235px;width:1134px;height:15px;background:#bcdefe;"></div>
<div style="left:394px;top:249px;width:1134px;height:1px;background:#c0d8f0;"></div>
<div style="left:1528px;top:249px;width:36px;height:1px;background:#c8c8c8;"></div>
<div style="left:469px;top:235px;width:1px;height:15px;background:#c2d6ea;"></div>
<div style="left:590px;top:235px;width:1px;height:15px;background:#c2d6ea;"></div>
<div style="left:629px;top:235px;width:1px;height:15px;background:#c2d6ea;"></div>
<div style="left:704px;top:235px;width:1px;height:15px;background:#c2d6ea;"></div>
<div style="left:794px;top:235px;width:1px;height:15px;background:#c2d6ea;"></div>
<div style="left:829px;top:235px;width:1px;height:15px;background:#c2d6ea;"></div>
<div style="left:897px;top:235px;width:1px;height:15px;background:#c2d6ea;"></div>
<div style="left:932px;top:235px;width:1px;height:15px;background:#c2d6ea;"></div>
<div style="left:1000px;top:235px;width:1px;height:15px;background:#c2d6ea;"></div>
<div style="left:1062px;top:235px;width:1px;height:15px;background:#c2d6ea;"></div>
<div style="left:1087px;top:235px;width:1px;height:15px;background:#c2d6ea;"></div>
<div style="left:1112px;top:235px;width:1px;height:15px;background:#c2d6ea;"></div>
<div style="left:1137px;top:235px;width:1px;height:15px;background:#c2d6ea;"></div>
<div style="left:1192px;top:235px;width:1px;height:15px;background:#c2d6ea;"></div>
<div style="left:1247px;top:235px;width:1px;height:15px;background:#c2d6ea;"></div>
<div style="left:1312px;top:235px;width:1px;height:15px;background:#c2d6ea;"></div>
<div style="left:1367px;top:235px;width:1px;height:15px;background:#c2d6ea;"></div>
<div style="left:1392px;top:235px;width:1px;height:15px;background:#c2d6ea;"></div>
<div style="left:1452px;top:235px;width:1px;height:15px;background:#c2d6ea;"></div>
<div style="left:1527px;top:235px;width:1px;height:15px;background:#c2d6ea;"></div>
<span class="t" style="top:235.00px;font-size:11px;line-height:14px;color:#000;letter-spacing:-0.345px;left:396.5px;">Las Vegas(NV)</span>
<span class="t" style="top:235.00px;font-size:11px;line-height:14px;color:#000;letter-spacing:-0.010px;left:472px;">Monte Carlo Resort a...</span>
<span class="t" style="top:235.00px;font-size:11px;line-height:14px;color:#000;letter-spacing:-0.094px;left:592px;">4star</span>
<span class="t" style="top:235.00px;font-size:11px;line-height:14px;color:#000;letter-spacing:-0.392px;left:632px;">Room Only</span>
<span class="t" style="top:235.00px;font-size:11px;line-height:14px;color:#000;letter-spacing:-0.155px;left:707px;">Deluxe Queen ...</span>
<span class="t" style="top:235.00px;font-size:11px;line-height:14px;color:#000;letter-spacing:-0.339px;left:797px;">Sat</span>
<span class="t" style="top:235.00px;font-size:11px;line-height:14px;color:#000;letter-spacing:0.094px;left:831.5px;">23/09/2017</span>
<span class="t" style="top:235.00px;font-size:11px;line-height:14px;color:#000;letter-spacing:-0.307px;left:900px;">Wed</span>
<span class="t" style="top:235.00px;font-size:11px;line-height:14px;color:#000;letter-spacing:0.094px;left:935px;">27/09/2017</span>
<span class="t" style="top:235.00px;font-size:11px;line-height:14px;color:#000;letter-spacing:-0.160px;left:1002.5px;">Bonotel</span>
<span class="t" style="top:235.00px;font-size:11px;line-height:14px;color:#000;letter-spacing:-0.026px;left:1156.00px;">355.91</span>
<span class="t" style="top:235.00px;font-size:11px;line-height:14px;color:#000;letter-spacing:-0.026px;left:1211.00px;">177.96</span>
<span class="t" style="top:235.00px;font-size:11px;line-height:14px;color:#000;letter-spacing:0.084px;left:1266.00px;">1,414.33</span>
<span class="t" style="top:235.00px;font-size:11px;line-height:14px;color:#000;letter-spacing:0.020px;left:1343.00px;">0.00</span>
<span class="t" style="top:235.00px;font-size:11px;line-height:14px;color:#000;letter-spacing:-1.042px;left:1394.5px;">XML</span>
<div style="left:394px;top:250px;width:1134px;height:15px;background:#bcdefe;"></div>
<div style="left:394px;top:264px;width:1134px;height:1px;background:#c0d8f0;"></div>
<div style="left:1528px;top:264px;width:36px;height:1px;background:#c8c8c8;"></div>
<div style="left:469px;top:250px;width:1px;height:15px;background:#c2d6ea;"></div>
<div style="left:590px;top:250px;width:1px;height:15px;background:#c2d6ea;"></div>
<div style="left:629px;top:250px;width:1px;height:15px;background:#c2d6ea;"></div>
<div style="left:704px;top:250px;width:1px;height:15px;background:#c2d6ea;"></div>
<div style="left:794px;top:250px;width:1px;height:15px;background:#c2d6ea;"></div>
<div style="left:829px;top:250px;width:1px;height:15px;background:#c2d6ea;"></div>
<div style="left:897px;top:250px;width:1px;height:15px;background:#c2d6ea;"></div>
<div style="left:932px;top:250px;width:1px;height:15px;background:#c2d6ea;"></div>
<div style="left:1000px;top:250px;width:1px;height:15px;background:#c2d6ea;"></div>
<div style="left:1062px;top:250px;width:1px;height:15px;background:#c2d6ea;"></div>
<div style="left:1087px;top:250px;width:1px;height:15px;background:#c2d6ea;"></div>
<div style="left:1112px;top:250px;width:1px;height:15px;background:#c2d6ea;"></div>
<div style="left:1137px;top:250px;width:1px;height:15px;background:#c2d6ea;"></div>
<div style="left:1192px;top:250px;width:1px;height:15px;background:#c2d6ea;"></div>
<div style="left:1247px;top:250px;width:1px;height:15px;background:#c2d6ea;"></div>
<div style="left:1312px;top:250px;width:1px;height:15px;background:#c2d6ea;"></div>
<div style="left:1367px;top:250px;width:1px;height:15px;background:#c2d6ea;"></div>
<div style="left:1392px;top:250px;width:1px;height:15px;background:#c2d6ea;"></div>
<div style="left:1452px;top:250px;width:1px;height:15px;background:#c2d6ea;"></div>
<div style="left:1527px;top:250px;width:1px;height:15px;background:#c2d6ea;"></div>
<span class="t" style="top:250.00px;font-size:11px;line-height:14px;color:#000;letter-spacing:-0.345px;left:396.5px;">Las Vegas(NV)</span>
<span class="t" style="top:250.00px;font-size:11px;line-height:14px;color:#000;letter-spacing:-0.220px;left:472px;">Monte Carlo</span>
<span class="t" style="top:250.00px;font-size:11px;line-height:14px;color:#000;letter-spacing:-0.194px;left:592px;">4 Stars</span>
<span class="t" style="top:250.00px;font-size:11px;line-height:14px;color:#000;letter-spacing:-0.449px;left:632px;">None</span>
<span class="t" style="top:250.00px;font-size:11px;line-height:14px;color:#000;letter-spacing:-0.176px;left:707px;">Deluxe Queen</span>
<span class="t" style="top:250.00px;font-size:11px;line-height:14px;color:#000;letter-spacing:-0.339px;left:797px;">Sat</span>
<span class="t" style="top:250.00px;font-size:11px;line-height:14px;color:#000;letter-spacing:0.094px;left:831.5px;">23/09/2017</span>
<span class="t" style="top:250.00px;font-size:11px;line-height:14px;color:#000;letter-spacing:-0.307px;left:900px;">Wed</span>
<span class="t" style="top:250.00px;font-size:11px;line-height:14px;color:#000;letter-spacing:0.094px;left:935px;">27/09/2017</span>
<span class="t" style="top:250.00px;font-size:11px;line-height:14px;color:#000;letter-spacing:-0.218px;left:1002.5px;">GTA</span>
<span class="t" style="top:250.00px;font-size:11px;line-height:14px;color:#000;letter-spacing:-0.026px;left:1156.00px;">358.31</span>
<span class="t" style="top:250.00px;font-size:11px;line-height:14px;color:#000;letter-spacing:-0.026px;left:1211.00px;">179.16</span>
<span class="t" style="top:250.00px;font-size:11px;line-height:14px;color:#000;letter-spacing:0.084px;left:1266.00px;">1,416.73</span>
<span class="t" style="top:250.00px;font-size:11px;line-height:14px;color:#000;letter-spacing:0.020px;left:1343.00px;">0.00</span>
<span class="t" style="top:250.00px;font-size:11px;line-height:14px;color:#000;letter-spacing:-1.042px;left:1394.5px;">XML</span>
<div style="left:394px;top:265px;width:1134px;height:15px;background:#bcdefe;"></div>
<div style="left:394px;top:279px;width:1134px;height:1px;background:#c0d8f0;"></div>
<div style="left:1528px;top:279px;width:36px;height:1px;background:#c8c8c8;"></div>
<div style="left:469px;top:265px;width:1px;height:15px;background:#c2d6ea;"></div>
<div style="left:590px;top:265px;width:1px;height:15px;background:#c2d6ea;"></div>
<div style="left:629px;top:265px;width:1px;height:15px;background:#c2d6ea;"></div>
<div style="left:704px;top:265px;width:1px;height:15px;background:#c2d6ea;"></div>
<div style="left:794px;top:265px;width:1px;height:15px;background:#c2d6ea;"></div>
<div style="left:829px;top:265px;width:1px;height:15px;background:#c2d6ea;"></div>
<div style="left:897px;top:265px;width:1px;height:15px;background:#c2d6ea;"></div>
<div style="left:932px;top:265px;width:1px;height:15px;background:#c2d6ea;"></div>
<div style="left:1000px;top:265px;width:1px;height:15px;background:#c2d6ea;"></div>
<div style="left:1062px;top:265px;width:1px;height:15px;background:#c2d6ea;"></div>
<div style="left:1087px;top:265px;width:1px;height:15px;background:#c2d6ea;"></div>
<div style="left:1112px;top:265px;width:1px;height:15px;background:#c2d6ea;"></div>
<div style="left:1137px;top:265px;width:1px;height:15px;background:#c2d6ea;"></div>
<div style="left:1192px;top:265px;width:1px;height:15px;background:#c2d6ea;"></div>
<div style="left:1247px;top:265px;width:1px;height:15px;background:#c2d6ea;"></div>
<div style="left:1312px;top:265px;width:1px;height:15px;background:#c2d6ea;"></div>
<div style="left:1367px;top:265px;width:1px;height:15px;background:#c2d6ea;"></div>
<div style="left:1392px;top:265px;width:1px;height:15px;background:#c2d6ea;"></div>
<div style="left:1452px;top:265px;width:1px;height:15px;background:#c2d6ea;"></div>
<div style="left:1527px;top:265px;width:1px;height:15px;background:#c2d6ea;"></div>
<span class="t" style="top:265.00px;font-size:11px;line-height:14px;color:#000;letter-spacing:-0.345px;left:396.5px;">Las Vegas(NV)</span>
<span class="t" style="top:265.00px;font-size:11px;line-height:14px;color:#000;letter-spacing:-0.220px;left:472px;">Monte Carlo</span>
<span class="t" style="top:265.00px;font-size:11px;line-height:14px;color:#000;letter-spacing:-0.194px;left:592px;">4 Stars</span>
<span class="t" style="top:265.00px;font-size:11px;line-height:14px;color:#000;letter-spacing:-0.449px;left:632px;">None</span>
<span class="t" style="top:265.00px;font-size:11px;line-height:14px;color:#000;letter-spacing:-0.162px;left:707px;">Deluxe King</span>
<span class="t" style="top:265.00px;font-size:11px;line-height:14px;color:#000;letter-spacing:-0.339px;left:797px;">Sat</span>
<span class="t" style="top:265.00px;font-size:11px;line-height:14px;color:#000;letter-spacing:0.094px;left:831.5px;">23/09/2017</span>
<span class="t" style="top:265.00px;font-size:11px;line-height:14px;color:#000;letter-spacing:-0.307px;left:900px;">Wed</span>
<span class="t" style="top:265.00px;font-size:11px;line-height:14px;color:#000;letter-spacing:0.094px;left:935px;">27/09/2017</span>
<span class="t" style="top:265.00px;font-size:11px;line-height:14px;color:#000;letter-spacing:-0.218px;left:1002.5px;">GTA</span>
<span class="t" style="top:265.00px;font-size:11px;line-height:14px;color:#000;letter-spacing:-0.026px;left:1156.00px;">358.31</span>
<span class="t" style="top:265.00px;font-size:11px;line-height:14px;color:#000;letter-spacing:-0.026px;left:1211.00px;">179.16</span>
<span class="t" style="top:265.00px;font-size:11px;line-height:14px;color:#000;letter-spacing:0.084px;left:1266.00px;">1,416.73</span>
<span class="t" style="top:265.00px;font-size:11px;line-height:14px;color:#000;letter-spacing:0.020px;left:1343.00px;">0.00</span>
<span class="t" style="top:265.00px;font-size:11px;line-height:14px;color:#000;letter-spacing:-1.042px;left:1394.5px;">XML</span>
<div style="left:394px;top:280px;width:1134px;height:15px;background:#bcdefe;"></div>
<div style="left:394px;top:294px;width:1134px;height:1px;background:#c0d8f0;"></div>
<div style="left:1528px;top:294px;width:36px;height:1px;background:#c8c8c8;"></div>
<div style="left:469px;top:280px;width:1px;height:15px;background:#c2d6ea;"></div>
<div style="left:590px;top:280px;width:1px;height:15px;background:#c2d6ea;"></div>
<div style="left:629px;top:280px;width:1px;height:15px;background:#c2d6ea;"></div>
<div style="left:704px;top:280px;width:1px;height:15px;background:#c2d6ea;"></div>
<div style="left:794px;top:280px;width:1px;height:15px;background:#c2d6ea;"></div>
<div style="left:829px;top:280px;width:1px;height:15px;background:#c2d6ea;"></div>
<div style="left:897px;top:280px;width:1px;height:15px;background:#c2d6ea;"></div>
<div style="left:932px;top:280px;width:1px;height:15px;background:#c2d6ea;"></div>
<div style="left:1000px;top:280px;width:1px;height:15px;background:#c2d6ea;"></div>
<div style="left:1062px;top:280px;width:1px;height:15px;background:#c2d6ea;"></div>
<div style="left:1087px;top:280px;width:1px;height:15px;background:#c2d6ea;"></div>
<div style="left:1112px;top:280px;width:1px;height:15px;background:#c2d6ea;"></div>
<div style="left:1137px;top:280px;width:1px;height:15px;background:#c2d6ea;"></div>
<div style="left:1192px;top:280px;width:1px;height:15px;background:#c2d6ea;"></div>
<div style="left:1247px;top:280px;width:1px;height:15px;background:#c2d6ea;"></div>
<div style="left:1312px;top:280px;width:1px;height:15px;background:#c2d6ea;"></div>
<div style="left:1367px;top:280px;width:1px;height:15px;background:#c2d6ea;"></div>
<div style="left:1392px;top:280px;width:1px;height:15px;background:#c2d6ea;"></div>
<div style="left:1452px;top:280px;width:1px;height:15px;background:#c2d6ea;"></div>
<div style="left:1527px;top:280px;width:1px;height:15px;background:#c2d6ea;"></div>
<span class="t" style="top:280.00px;font-size:11px;line-height:14px;color:#000;letter-spacing:0.007px;left:396.5px;">Las Vegas T...</span>
<span class="t" style="top:280.00px;font-size:11px;line-height:14px;color:#000;letter-spacing:-0.027px;left:472px;">Monte Carlo Resort ...</span>
<span class="t" style="top:280.00px;font-size:11px;line-height:14px;color:#000;letter-spacing:0.068px;left:592px;">4.0</span>
<span class="t" style="top:280.00px;font-size:11px;line-height:14px;color:#000;letter-spacing:-0.392px;left:632px;">Room Only</span>
<span class="t" style="top:280.00px;font-size:11px;line-height:14px;color:#000;letter-spacing:-0.143px;left:707px;">High Floor Delu...</span>
<span class="t" style="top:280.00px;font-size:11px;line-height:14px;color:#000;letter-spacing:-0.339px;left:797px;">Sat</span>
<span class="t" style="top:280.00px;font-size:11px;line-height:14px;color:#000;letter-spacing:0.094px;left:831.5px;">23/09/2017</span>
<span class="t" style="top:280.00px;font-size:11px;line-height:14px;color:#000;letter-spacing:-0.307px;left:900px;">Wed</span>
<span class="t" style="top:280.00px;font-size:11px;line-height:14px;color:#000;letter-spacing:0.094px;left:935px;">27/09/2017</span>
<span class="t" style="top:280.00px;font-size:11px;line-height:14px;color:#000;letter-spacing:-0.165px;left:1002.5px;">Get A Bed</span>
<span class="t" style="top:280.00px;font-size:12px;line-height:16px;color:#000;letter-spacing:-0.140px;left:1072.23px;">*</span>
<span class="t" style="top:280.00px;font-size:11px;line-height:14px;color:#000;letter-spacing:-0.026px;left:1156.00px;">374.86</span>
<span class="t" style="top:280.00px;font-size:11px;line-height:14px;color:#000;letter-spacing:-0.026px;left:1211.00px;">187.43</span>
<span class="t" style="top:280.00px;font-size:11px;line-height:14px;color:#000;letter-spacing:0.084px;left:1266.00px;">1,433.28</span>
<span class="t" style="top:280.00px;font-size:11px;line-height:14px;color:#000;letter-spacing:0.020px;left:1343.00px;">0.00</span>
<span class="t" style="top:280.00px;font-size:11px;line-height:14px;color:#000;letter-spacing:-1.042px;left:1394.5px;">XML</span>
<div style="left:394px;top:295px;width:1134px;height:15px;background:#bcdefe;"></div>
<div style="left:394px;top:309px;width:1134px;height:1px;background:#c0d8f0;"></div>
<div style="left:1528px;top:309px;width:36px;height:1px;background:#c8c8c8;"></div>
<div style="left:469px;top:295px;width:1px;height:15px;background:#c2d6ea;"></div>
<div style="left:590px;top:295px;width:1px;height:15px;background:#c2d6ea;"></div>
<div style="left:629px;top:295px;width:1px;height:15px;background:#c2d6ea;"></div>
<div style="left:704px;top:295px;width:1px;height:15px;background:#c2d6ea;"></div>
<div style="left:794px;top:295px;width:1px;height:15px;background:#c2d6ea;"></div>
<div style="left:829px;top:295px;width:1px;height:15px;background:#c2d6ea;"></div>
<div style="left:897px;top:295px;width:1px;height:15px;background:#c2d6ea;"></div>
<div style="left:932px;top:295px;width:1px;height:15px;background:#c2d6ea;"></div>
<div style="left:1000px;top:295px;width:1px;height:15px;background:#c2d6ea;"></div>
<div style="left:1062px;top:295px;width:1px;height:15px;background:#c2d6ea;"></div>
<div style="left:1087px;top:295px;width:1px;height:15px;background:#c2d6ea;"></div>
<div style="left:1112px;top:295px;width:1px;height:15px;background:#c2d6ea;"></div>
<div style="left:1137px;top:295px;width:1px;height:15px;background:#c2d6ea;"></div>
<div style="left:1192px;top:295px;width:1px;height:15px;background:#c2d6ea;"></div>
<div style="left:1247px;top:295px;width:1px;height:15px;background:#c2d6ea;"></div>
<div style="left:1312px;top:295px;width:1px;height:15px;background:#c2d6ea;"></div>
<div style="left:1367px;top:295px;width:1px;height:15px;background:#c2d6ea;"></div>
<div style="left:1392px;top:295px;width:1px;height:15px;background:#c2d6ea;"></div>
<div style="left:1452px;top:295px;width:1px;height:15px;background:#c2d6ea;"></div>
<div style="left:1527px;top:295px;width:1px;height:15px;background:#c2d6ea;"></div>
<span class="t" style="top:295.00px;font-size:11px;line-height:14px;color:#000;letter-spacing:0.007px;left:396.5px;">Las Vegas T...</span>
<span class="t" style="top:295.00px;font-size:11px;line-height:14px;color:#000;letter-spacing:-0.027px;left:472px;">Monte Carlo Resort ...</span>
<span class="t" style="top:295.00px;font-size:11px;line-height:14px;color:#000;letter-spacing:0.068px;left:592px;">4.0</span>
<span class="t" style="top:295.00px;font-size:11px;line-height:14px;color:#000;letter-spacing:-0.392px;left:632px;">Room Only</span>
<span class="t" style="top:295.00px;font-size:11px;line-height:14px;color:#000;letter-spacing:-0.155px;left:707px;">Deluxe Queen ...</span>
<span class="t" style="top:295.00px;font-size:11px;line-height:14px;color:#000;letter-spacing:-0.339px;left:797px;">Sat</span>
<span class="t" style="top:295.00px;font-size:11px;line-height:14px;color:#000;letter-spacing:0.094px;left:831.5px;">23/09/2017</span>
<span class="t" style="top:295.00px;font-size:11px;line-height:14px;color:#000;letter-spacing:-0.307px;left:900px;">Wed</span>
<span class="t" style="top:295.00px;font-size:11px;line-height:14px;color:#000;letter-spacing:0.094px;left:935px;">27/09/2017</span>
<span class="t" style="top:295.00px;font-size:11px;line-height:14px;color:#000;letter-spacing:-0.165px;left:1002.5px;">Get A Bed</span>
<span class="t" style="top:295.00px;font-size:12px;line-height:16px;color:#000;letter-spacing:-0.140px;left:1072.23px;">*</span>
<span class="t" style="top:295.00px;font-size:11px;line-height:14px;color:#000;letter-spacing:-0.026px;left:1156.00px;">374.86</span>
<span class="t" style="top:295.00px;font-size:11px;line-height:14px;color:#000;letter-spacing:-0.026px;left:1211.00px;">187.43</span>
<span class="t" style="top:295.00px;font-size:11px;line-height:14px;color:#000;letter-spacing:0.084px;left:1266.00px;">1,433.28</span>
<span class="t" style="top:295.00px;font-size:11px;line-height:14px;color:#000;letter-spacing:0.020px;left:1343.00px;">0.00</span>
<span class="t" style="top:295.00px;font-size:11px;line-height:14px;color:#000;letter-spacing:-1.042px;left:1394.5px;">XML</span>
<div style="left:394px;top:310px;width:1134px;height:15px;background:#bcdefe;"></div>
<div style="left:394px;top:324px;width:1134px;height:1px;background:#c0d8f0;"></div>
<div style="left:1528px;top:324px;width:36px;height:1px;background:#c8c8c8;"></div>
<div style="left:469px;top:310px;width:1px;height:15px;background:#c2d6ea;"></div>
<div style="left:590px;top:310px;width:1px;height:15px;background:#c2d6ea;"></div>
<div style="left:629px;top:310px;width:1px;height:15px;background:#c2d6ea;"></div>
<div style="left:704px;top:310px;width:1px;height:15px;background:#c2d6ea;"></div>
<div style="left:794px;top:310px;width:1px;height:15px;background:#c2d6ea;"></div>
<div style="left:829px;top:310px;width:1px;height:15px;background:#c2d6ea;"></div>
<div style="left:897px;top:310px;width:1px;height:15px;background:#c2d6ea;"></div>
<div style="left:932px;top:310px;width:1px;height:15px;background:#c2d6ea;"></div>
<div style="left:1000px;top:310px;width:1px;height:15px;background:#c2d6ea;"></div>
<div style="left:1062px;top:310px;width:1px;height:15px;background:#c2d6ea;"></div>
<div style="left:1087px;top:310px;width:1px;height:15px;background:#c2d6ea;"></div>
<div style="left:1112px;top:310px;width:1px;height:15px;background:#c2d6ea;"></div>
<div style="left:1137px;top:310px;width:1px;height:15px;background:#c2d6ea;"></div>
<div style="left:1192px;top:310px;width:1px;height:15px;background:#c2d6ea;"></div>
<div style="left:1247px;top:310px;width:1px;height:15px;background:#c2d6ea;"></div>
<div style="left:1312px;top:310px;width:1px;height:15px;background:#c2d6ea;"></div>
<div style="left:1367px;top:310px;width:1px;height:15px;background:#c2d6ea;"></div>
<div style="left:1392px;top:310px;width:1px;height:15px;background:#c2d6ea;"></div>
<div style="left:1452px;top:310px;width:1px;height:15px;background:#c2d6ea;"></div>
<div style="left:1527px;top:310px;width:1px;height:15px;background:#c2d6ea;"></div>
<span class="t" style="top:310.00px;font-size:11px;line-height:14px;color:#000;letter-spacing:0.007px;left:396.5px;">Las Vegas T...</span>
<span class="t" style="top:310.00px;font-size:11px;line-height:14px;color:#000;letter-spacing:-0.027px;left:472px;">Monte Carlo Resort ...</span>
<span class="t" style="top:310.00px;font-size:11px;line-height:14px;color:#000;letter-spacing:0.068px;left:592px;">4.0</span>
<span class="t" style="top:310.00px;font-size:11px;line-height:14px;color:#000;letter-spacing:-0.392px;left:632px;">Room Only</span>
<span class="t" style="top:310.00px;font-size:11px;line-height:14px;color:#000;letter-spacing:-0.151px;left:707px;">Deluxe King Ro...</span>
<span class="t" style="top:310.00px;font-size:11px;line-height:14px;color:#000;letter-spacing:-0.339px;left:797px;">Sat</span>
<span class="t" style="top:310.00px;font-size:11px;line-height:14px;color:#000;letter-spacing:0.094px;left:831.5px;">23/09/2017</span>
<span class="t" style="top:310.00px;font-size:11px;line-height:14px;color:#000;letter-spacing:-0.307px;left:900px;">Wed</span>
<span class="t" style="top:310.00px;font-size:11px;line-height:14px;color:#000;letter-spacing:0.094px;left:935px;">27/09/2017</span>
<span class="t" style="top:310.00px;font-size:11px;line-height:14px;color:#000;letter-spacing:-0.165px;left:1002.5px;">Get A Bed</span>
<span class="t" style="top:310.00px;font-size:12px;line-height:16px;color:#000;letter-spacing:-0.140px;left:1072.23px;">*</span>
<span class="t" style="top:310.00px;font-size:11px;line-height:14px;color:#000;letter-spacing:-0.026px;left:1156.00px;">374.86</span>
<span class="t" style="top:310.00px;font-size:11px;line-height:14px;color:#000;letter-spacing:-0.026px;left:1211.00px;">187.43</span>
<span class="t" style="top:310.00px;font-size:11px;line-height:14px;color:#000;letter-spacing:0.084px;left:1266.00px;">1,433.28</span>
<span class="t" style="top:310.00px;font-size:11px;line-height:14px;color:#000;letter-spacing:0.020px;left:1343.00px;">0.00</span>
<span class="t" style="top:310.00px;font-size:11px;line-height:14px;color:#000;letter-spacing:-1.042px;left:1394.5px;">XML</span>
<div style="left:394px;top:325px;width:1134px;height:15px;background:#bcdefe;"></div>
<div style="left:394px;top:339px;width:1134px;height:1px;background:#c0d8f0;"></div>
<div style="left:1528px;top:339px;width:36px;height:1px;background:#c8c8c8;"></div>
<div style="left:469px;top:325px;width:1px;height:15px;background:#c2d6ea;"></div>
<div style="left:590px;top:325px;width:1px;height:15px;background:#c2d6ea;"></div>
<div style="left:629px;top:325px;width:1px;height:15px;background:#c2d6ea;"></div>
<div style="left:704px;top:325px;width:1px;height:15px;background:#c2d6ea;"></div>
<div style="left:794px;top:325px;width:1px;height:15px;background:#c2d6ea;"></div>
<div style="left:829px;top:325px;width:1px;height:15px;background:#c2d6ea;"></div>
<div style="left:897px;top:325px;width:1px;height:15px;background:#c2d6ea;"></div>
<div style="left:932px;top:325px;width:1px;height:15px;background:#c2d6ea;"></div>
<div style="left:1000px;top:325px;width:1px;height:15px;background:#c2d6ea;"></div>
<div style="left:1062px;top:325px;width:1px;height:15px;background:#c2d6ea;"></div>
<div style="left:1087px;top:325px;width:1px;height:15px;background:#c2d6ea;"></div>
<div style="left:1112px;top:325px;width:1px;height:15px;background:#c2d6ea;"></div>
<div style="left:1137px;top:325px;width:1px;height:15px;background:#c2d6ea;"></div>
<div style="left:1192px;top:325px;width:1px;height:15px;background:#c2d6ea;"></div>
<div style="left:1247px;top:325px;width:1px;height:15px;background:#c2d6ea;"></div>
<div style="left:1312px;top:325px;width:1px;height:15px;background:#c2d6ea;"></div>
<div style="left:1367px;top:325px;width:1px;height:15px;background:#c2d6ea;"></div>
<div style="left:1392px;top:325px;width:1px;height:15px;background:#c2d6ea;"></div>
<div style="left:1452px;top:325px;width:1px;height:15px;background:#c2d6ea;"></div>
<div style="left:1527px;top:325px;width:1px;height:15px;background:#c2d6ea;"></div>
<span class="t" style="top:325.00px;font-size:11px;line-height:14px;color:#000;letter-spacing:-0.345px;left:396.5px;">Las Vegas(NV)</span>
<span class="t" style="top:325.00px;font-size:11px;line-height:14px;color:#000;letter-spacing:-0.010px;left:472px;">Monte Carlo Resort a...</span>
<span class="t" style="top:325.00px;font-size:11px;line-height:14px;color:#000;letter-spacing:-0.094px;left:592px;">4star</span>
<span class="t" style="top:325.00px;font-size:11px;line-height:14px;color:#000;letter-spacing:-0.392px;left:632px;">Room Only</span>
<span class="t" style="top:325.00px;font-size:11px;line-height:14px;color:#000;letter-spacing:-0.140px;left:707px;">Strip View Delu...</span>
<span class="t" style="top:325.00px;font-size:11px;line-height:14px;color:#000;letter-spacing:-0.339px;left:797px;">Sat</span>
<span class="t" style="top:325.00px;font-size:11px;line-height:14px;color:#000;letter-spacing:0.094px;left:831.5px;">23/09/2017</span>
<span class="t" style="top:325.00px;font-size:11px;line-height:14px;color:#000;letter-spacing:-0.307px;left:900px;">Wed</span>
<span class="t" style="top:325.00px;font-size:11px;line-height:14px;color:#000;letter-spacing:0.094px;left:935px;">27/09/2017</span>
<span class="t" style="top:325.00px;font-size:11px;line-height:14px;color:#000;letter-spacing:-0.160px;left:1002.5px;">Bonotel</span>
<span class="t" style="top:325.00px;font-size:11px;line-height:14px;color:#000;letter-spacing:-0.026px;left:1156.00px;">424.54</span>
<span class="t" style="top:325.00px;font-size:11px;line-height:14px;color:#000;letter-spacing:-0.026px;left:1211.00px;">212.27</span>
<span class="t" style="top:325.00px;font-size:11px;line-height:14px;color:#000;letter-spacing:0.084px;left:1266.00px;">1,482.96</span>
<span class="t" style="top:325.00px;font-size:11px;line-height:14px;color:#000;letter-spacing:0.020px;left:1343.00px;">0.00</span>
<span class="t" style="top:325.00px;font-size:11px;line-height:14px;color:#000;letter-spacing:-1.042px;left:1394.5px;">XML</span>
<div style="left:394px;top:340px;width:1134px;height:15px;background:#bcdefe;"></div>
<div style="left:394px;top:354px;width:1134px;height:1px;background:#c0d8f0;"></div>
<div style="left:1528px;top:354px;width:36px;height:1px;background:#c8c8c8;"></div>
<div style="left:469px;top:340px;width:1px;height:15px;background:#c2d6ea;"></div>
<div style="left:590px;top:340px;width:1px;height:15px;background:#c2d6ea;"></div>
<div style="left:629px;top:340px;width:1px;height:15px;background:#c2d6ea;"></div>
<div style="left:704px;top:340px;width:1px;height:15px;background:#c2d6ea;"></div>
<div style="left:794px;top:340px;width:1px;height:15px;background:#c2d6ea;"></div>
<div style="left:829px;top:340px;width:1px;height:15px;background:#c2d6ea;"></div>
<div style="left:897px;top:340px;width:1px;height:15px;background:#c2d6ea;"></div>
<div style="left:932px;top:340px;width:1px;height:15px;background:#c2d6ea;"></div>
<div style="left:1000px;top:340px;width:1px;height:15px;background:#c2d6ea;"></div>
<div style="left:1062px;top:340px;width:1px;height:15px;background:#c2d6ea;"></div>
<div style="left:1087px;top:340px;width:1px;height:15px;background:#c2d6ea;"></div>
<div style="left:1112px;top:340px;width:1px;height:15px;background:#c2d6ea;"></div>
<div style="left:1137px;top:340px;width:1px;height:15px;background:#c2d6ea;"></div>
<div style="left:1192px;top:340px;width:1px;height:15px;background:#c2d6ea;"></div>
<div style="left:1247px;top:340px;width:1px;height:15px;background:#c2d6ea;"></div>
<div style="left:1312px;top:340px;width:1px;height:15px;background:#c2d6ea;"></div>
<div style="left:1367px;top:340px;width:1px;height:15px;background:#c2d6ea;"></div>
<div style="left:1392px;top:340px;width:1px;height:15px;background:#c2d6ea;"></div>
<div style="left:1452px;top:340px;width:1px;height:15px;background:#c2d6ea;"></div>
<div style="left:1527px;top:340px;width:1px;height:15px;background:#c2d6ea;"></div>
<span class="t" style="top:340.00px;font-size:11px;line-height:14px;color:#000;letter-spacing:0.007px;left:396.5px;">Las Vegas T...</span>
<span class="t" style="top:340.00px;font-size:11px;line-height:14px;color:#000;letter-spacing:-0.027px;left:472px;">Monte Carlo Resort ...</span>
<span class="t" style="top:340.00px;font-size:11px;line-height:14px;color:#000;letter-spacing:0.068px;left:592px;">4.0</span>
<span class="t" style="top:340.00px;font-size:11px;line-height:14px;color:#000;letter-spacing:-0.392px;left:632px;">Room Only</span>
<span class="t" style="top:340.00px;font-size:11px;line-height:14px;color:#000;letter-spacing:-0.140px;left:707px;">Strip View Delu...</span>
<span class="t" style="top:340.00px;font-size:11px;line-height:14px;color:#000;letter-spacing:-0.339px;left:797px;">Sat</span>
<span class="t" style="top:340.00px;font-size:11px;line-height:14px;color:#000;letter-spacing:0.094px;left:831.5px;">23/09/2017</span>
<span class="t" style="top:340.00px;font-size:11px;line-height:14px;color:#000;letter-spacing:-0.307px;left:900px;">Wed</span>
<span class="t" style="top:340.00px;font-size:11px;line-height:14px;color:#000;letter-spacing:0.094px;left:935px;">27/09/2017</span>
<span class="t" style="top:340.00px;font-size:11px;line-height:14px;color:#000;letter-spacing:-0.165px;left:1002.5px;">Get A Bed</span>
<span class="t" style="top:340.00px;font-size:12px;line-height:16px;color:#000;letter-spacing:-0.140px;left:1072.23px;">*</span>
<span class="t" style="top:340.00px;font-size:11px;line-height:14px;color:#000;letter-spacing:-0.026px;left:1156.00px;">447.14</span>
<span class="t" style="top:340.00px;font-size:11px;line-height:14px;color:#000;letter-spacing:-0.026px;left:1211.00px;">223.57</span>
<span class="t" style="top:340.00px;font-size:11px;line-height:14px;color:#000;letter-spacing:0.084px;left:1266.00px;">1,505.56</span>
<span class="t" style="top:340.00px;font-size:11px;line-height:14px;color:#000;letter-spacing:0.020px;left:1343.00px;">0.00</span>
<span class="t" style="top:340.00px;font-size:11px;line-height:14px;color:#000;letter-spacing:-1.042px;left:1394.5px;">XML</span>
<div style="left:394px;top:355px;width:1134px;height:15px;background:#bcdefe;"></div>
<div style="left:394px;top:369px;width:1134px;height:1px;background:#c0d8f0;"></div>
<div style="left:1528px;top:369px;width:36px;height:1px;background:#c8c8c8;"></div>
<div style="left:469px;top:355px;width:1px;height:15px;background:#c2d6ea;"></div>
<div style="left:590px;top:355px;width:1px;height:15px;background:#c2d6ea;"></div>
<div style="left:629px;top:355px;width:1px;height:15px;background:#c2d6ea;"></div>
<div style="left:704px;top:355px;width:1px;height:15px;background:#c2d6ea;"></div>
<div style="left:794px;top:355px;width:1px;height:15px;background:#c2d6ea;"></div>
<div style="left:829px;top:355px;width:1px;height:15px;background:#c2d6ea;"></div>
<div style="left:897px;top:355px;width:1px;height:15px;background:#c2d6ea;"></div>
<div style="left:932px;top:355px;width:1px;height:15px;background:#c2d6ea;"></div>
<div style="left:1000px;top:355px;width:1px;height:15px;background:#c2d6ea;"></div>
<div style="left:1062px;top:355px;width:1px;height:15px;background:#c2d6ea;"></div>
<div style="left:1087px;top:355px;width:1px;height:15px;background:#c2d6ea;"></div>
<div style="left:1112px;top:355px;width:1px;height:15px;background:#c2d6ea;"></div>
<div style="left:1137px;top:355px;width:1px;height:15px;background:#c2d6ea;"></div>
<div style="left:1192px;top:355px;width:1px;height:15px;background:#c2d6ea;"></div>
<div style="left:1247px;top:355px;width:1px;height:15px;background:#c2d6ea;"></div>
<div style="left:1312px;top:355px;width:1px;height:15px;background:#c2d6ea;"></div>
<div style="left:1367px;top:355px;width:1px;height:15px;background:#c2d6ea;"></div>
<div style="left:1392px;top:355px;width:1px;height:15px;background:#c2d6ea;"></div>
<div style="left:1452px;top:355px;width:1px;height:15px;background:#c2d6ea;"></div>
<div style="left:1527px;top:355px;width:1px;height:15px;background:#c2d6ea;"></div>
<span class="t" style="top:355.00px;font-size:11px;line-height:14px;color:#000;letter-spacing:-0.345px;left:396.5px;">Las Vegas(NV)</span>
<span class="t" style="top:355.00px;font-size:11px;line-height:14px;color:#000;letter-spacing:-0.010px;left:472px;">Monte Carlo Resort a...</span>
<span class="t" style="top:355.00px;font-size:11px;line-height:14px;color:#000;letter-spacing:-0.094px;left:592px;">4star</span>
<span class="t" style="top:355.00px;font-size:11px;line-height:14px;color:#000;letter-spacing:-0.392px;left:632px;">Room Only</span>
<span class="t" style="top:355.00px;font-size:11px;line-height:14px;color:#000;letter-spacing:-0.147px;left:707px;">Monaco Suite (...</span>
<span class="t" style="top:355.00px;font-size:11px;line-height:14px;color:#000;letter-spacing:-0.339px;left:797px;">Sat</span>
<span class="t" style="top:355.00px;font-size:11px;line-height:14px;color:#000;letter-spacing:0.094px;left:831.5px;">23/09/2017</span>
<span class="t" style="top:355.00px;font-size:11px;line-height:14px;color:#000;letter-spacing:-0.307px;left:900px;">Wed</span>
<span class="t" style="top:355.00px;font-size:11px;line-height:14px;color:#000;letter-spacing:0.094px;left:935px;">27/09/2017</span>
<span class="t" style="top:355.00px;font-size:11px;line-height:14px;color:#000;letter-spacing:-0.160px;left:1002.5px;">Bonotel</span>
<span class="t" style="top:355.00px;font-size:11px;line-height:14px;color:#000;letter-spacing:-0.026px;left:1156.00px;">497.95</span>
<span class="t" style="top:355.00px;font-size:11px;line-height:14px;color:#000;letter-spacing:-0.026px;left:1211.00px;">248.98</span>
<span class="t" style="top:355.00px;font-size:11px;line-height:14px;color:#000;letter-spacing:0.084px;left:1266.00px;">1,556.37</span>
<span class="t" style="top:355.00px;font-size:11px;line-height:14px;color:#000;letter-spacing:0.020px;left:1343.00px;">0.00</span>
<span class="t" style="top:355.00px;font-size:11px;line-height:14px;color:#000;letter-spacing:-1.042px;left:1394.5px;">XML</span>
<div style="left:394px;top:370px;width:1134px;height:15px;background:#bcdefe;"></div>
<div style="left:394px;top:384px;width:1134px;height:1px;background:#c0d8f0;"></div>
<div style="left:1528px;top:384px;width:36px;height:1px;background:#c8c8c8;"></div>
<div style="left:469px;top:370px;width:1px;height:15px;background:#c2d6ea;"></div>
<div style="left:590px;top:370px;width:1px;height:15px;background:#c2d6ea;"></div>
<div style="left:629px;top:370px;width:1px;height:15px;background:#c2d6ea;"></div>
<div style="left:704px;top:370px;width:1px;height:15px;background:#c2d6ea;"></div>
<div style="left:794px;top:370px;width:1px;height:15px;background:#c2d6ea;"></div>
<div style="left:829px;top:370px;width:1px;height:15px;background:#c2d6ea;"></div>
<div style="left:897px;top:370px;width:1px;height:15px;background:#c2d6ea;"></div>
<div style="left:932px;top:370px;width:1px;height:15px;background:#c2d6ea;"></div>
<div style="left:1000px;top:370px;width:1px;height:15px;background:#c2d6ea;"></div>
<div style="left:1062px;top:370px;width:1px;height:15px;background:#c2d6ea;"></div>
<div style="left:1087px;top:370px;width:1px;height:15px;background:#c2d6ea;"></div>
<div style="left:1112px;top:370px;width:1px;height:15px;background:#c2d6ea;"></div>
<div style="left:1137px;top:370px;width:1px;height:15px;background:#c2d6ea;"></div>
<div style="left:1192px;top:370px;width:1px;height:15px;background:#c2d6ea;"></div>
<div style="left:1247px;top:370px;width:1px;height:15px;background:#c2d6ea;"></div>
<div style="left:1312px;top:370px;width:1px;height:15px;background:#c2d6ea;"></div>
<div style="left:1367px;top:370px;width:1px;height:15px;background:#c2d6ea;"></div>
<div style="left:1392px;top:370px;width:1px;height:15px;background:#c2d6ea;"></div>
<div style="left:1452px;top:370px;width:1px;height:15px;background:#c2d6ea;"></div>
<div style="left:1527px;top:370px;width:1px;height:15px;background:#c2d6ea;"></div>
<span class="t" style="top:370.00px;font-size:11px;line-height:14px;color:#000;letter-spacing:-0.345px;left:396.5px;">Las Vegas(NV)</span>
<span class="t" style="top:370.00px;font-size:11px;line-height:14px;color:#000;letter-spacing:-0.220px;left:472px;">Monte Carlo</span>
<span class="t" style="top:370.00px;font-size:11px;line-height:14px;color:#000;letter-spacing:-0.194px;left:592px;">4 Stars</span>
<span class="t" style="top:370.00px;font-size:11px;line-height:14px;color:#000;letter-spacing:-0.449px;left:632px;">None</span>
<span class="t" style="top:370.00px;font-size:11px;line-height:14px;color:#000;letter-spacing:-0.168px;left:707px;">Monaco Suite</span>
<span class="t" style="top:370.00px;font-size:11px;line-height:14px;color:#000;letter-spacing:-0.339px;left:797px;">Sat</span>
<span class="t" style="top:370.00px;font-size:11px;line-height:14px;color:#000;letter-spacing:0.094px;left:831.5px;">23/09/2017</span>
<span class="t" style="top:370.00px;font-size:11px;line-height:14px;color:#000;letter-spacing:-0.307px;left:900px;">Wed</span>
<span class="t" style="top:370.00px;font-size:11px;line-height:14px;color:#000;letter-spacing:0.094px;left:935px;">27/09/2017</span>
<span class="t" style="top:370.00px;font-size:11px;line-height:14px;color:#000;letter-spacing:-0.218px;left:1002.5px;">GTA</span>
<span class="t" style="top:370.00px;font-size:11px;line-height:14px;color:#000;letter-spacing:-0.026px;left:1156.00px;">512.40</span>
<span class="t" style="top:370.00px;font-size:11px;line-height:14px;color:#000;letter-spacing:-0.026px;left:1211.00px;">256.20</span>
<span class="t" style="top:370.00px;font-size:11px;line-height:14px;color:#000;letter-spacing:0.084px;left:1266.00px;">1,570.82</span>
<span class="t" style="top:370.00px;font-size:11px;line-height:14px;color:#000;letter-spacing:0.020px;left:1343.00px;">0.00</span>
<span class="t" style="top:370.00px;font-size:11px;line-height:14px;color:#000;letter-spacing:-1.042px;left:1394.5px;">XML</span>
<div style="left:394px;top:385px;width:1134px;height:15px;background:#bcdefe;"></div>
<div style="left:394px;top:399px;width:1134px;height:1px;background:#c0d8f0;"></div>
<div style="left:1528px;top:399px;width:36px;height:1px;background:#c8c8c8;"></div>
<div style="left:469px;top:385px;width:1px;height:15px;background:#c2d6ea;"></div>
<div style="left:590px;top:385px;width:1px;height:15px;background:#c2d6ea;"></div>
<div style="left:629px;top:385px;width:1px;height:15px;background:#c2d6ea;"></div>
<div style="left:704px;top:385px;width:1px;height:15px;background:#c2d6ea;"></div>
<div style="left:794px;top:385px;width:1px;height:15px;background:#c2d6ea;"></div>
<div style="left:829px;top:385px;width:1px;height:15px;background:#c2d6ea;"></div>
<div style="left:897px;top:385px;width:1px;height:15px;background:#c2d6ea;"></div>
<div style="left:932px;top:385px;width:1px;height:15px;background:#c2d6ea;"></div>
<div style="left:1000px;top:385px;width:1px;height:15px;background:#c2d6ea;"></div>
<div style="left:1062px;top:385px;width:1px;height:15px;background:#c2d6ea;"></div>
<div style="left:1087px;top:385px;width:1px;height:15px;background:#c2d6ea;"></div>
<div style="left:1112px;top:385px;width:1px;height:15px;background:#c2d6ea;"></div>
<div style="left:1137px;top:385px;width:1px;height:15px;background:#c2d6ea;"></div>
<div style="left:1192px;top:385px;width:1px;height:15px;background:#c2d6ea;"></div>
<div style="left:1247px;top:385px;width:1px;height:15px;background:#c2d6ea;"></div>
<div style="left:1312px;top:385px;width:1px;height:15px;background:#c2d6ea;"></div>
<div style="left:1367px;top:385px;width:1px;height:15px;background:#c2d6ea;"></div>
<div style="left:1392px;top:385px;width:1px;height:15px;background:#c2d6ea;"></div>
<div style="left:1452px;top:385px;width:1px;height:15px;background:#c2d6ea;"></div>
<div style="left:1527px;top:385px;width:1px;height:15px;background:#c2d6ea;"></div>
<span class="t" style="top:385.00px;font-size:11px;line-height:14px;color:#000;letter-spacing:0.007px;left:396.5px;">Las Vegas T...</span>
<span class="t" style="top:385.00px;font-size:11px;line-height:14px;color:#000;letter-spacing:-0.027px;left:472px;">Monte Carlo Resort ...</span>
<span class="t" style="top:385.00px;font-size:11px;line-height:14px;color:#000;letter-spacing:0.068px;left:592px;">4.0</span>
<span class="t" style="top:385.00px;font-size:11px;line-height:14px;color:#000;letter-spacing:-0.392px;left:632px;">Room Only</span>
<span class="t" style="top:385.00px;font-size:11px;line-height:14px;color:#000;letter-spacing:-0.149px;left:707px;">Monaco Suite ...</span>
<span class="t" style="top:385.00px;font-size:11px;line-height:14px;color:#000;letter-spacing:-0.339px;left:797px;">Sat</span>
<span class="t" style="top:385.00px;font-size:11px;line-height:14px;color:#000;letter-spacing:0.094px;left:831.5px;">23/09/2017</span>
<span class="t" style="top:385.00px;font-size:11px;line-height:14px;color:#000;letter-spacing:-0.307px;left:900px;">Wed</span>
<span class="t" style="top:385.00px;font-size:11px;line-height:14px;color:#000;letter-spacing:0.094px;left:935px;">27/09/2017</span>
<span class="t" style="top:385.00px;font-size:11px;line-height:14px;color:#000;letter-spacing:-0.165px;left:1002.5px;">Get A Bed</span>
<span class="t" style="top:385.00px;font-size:12px;line-height:16px;color:#000;letter-spacing:-0.140px;left:1072.23px;">*</span>
<span class="t" style="top:385.00px;font-size:11px;line-height:14px;color:#000;letter-spacing:-0.026px;left:1156.00px;">524.46</span>
<span class="t" style="top:385.00px;font-size:11px;line-height:14px;color:#000;letter-spacing:-0.026px;left:1211.00px;">262.23</span>
<span class="t" style="top:385.00px;font-size:11px;line-height:14px;color:#000;letter-spacing:0.084px;left:1266.00px;">1,582.88</span>
<span class="t" style="top:385.00px;font-size:11px;line-height:14px;color:#000;letter-spacing:0.020px;left:1343.00px;">0.00</span>
<span class="t" style="top:385.00px;font-size:11px;line-height:14px;color:#000;letter-spacing:-1.042px;left:1394.5px;">XML</span>
<div style="left:394px;top:400px;width:1134px;height:15px;background:#bcdefe;"></div>
<div style="left:394px;top:414px;width:1134px;height:1px;background:#c0d8f0;"></div>
<div style="left:1528px;top:414px;width:36px;height:1px;background:#c8c8c8;"></div>
<div style="left:469px;top:400px;width:1px;height:15px;background:#c2d6ea;"></div>
<div style="left:590px;top:400px;width:1px;height:15px;background:#c2d6ea;"></div>
<div style="left:629px;top:400px;width:1px;height:15px;background:#c2d6ea;"></div>
<div style="left:704px;top:400px;width:1px;height:15px;background:#c2d6ea;"></div>
<div style="left:794px;top:400px;width:1px;height:15px;background:#c2d6ea;"></div>
<div style="left:829px;top:400px;width:1px;height:15px;background:#c2d6ea;"></div>
<div style="left:897px;top:400px;width:1px;height:15px;background:#c2d6ea;"></div>
<div style="left:932px;top:400px;width:1px;height:15px;background:#c2d6ea;"></div>
<div style="left:1000px;top:400px;width:1px;height:15px;background:#c2d6ea;"></div>
<div style="left:1062px;top:400px;width:1px;height:15px;background:#c2d6ea;"></div>
<div style="left:1087px;top:400px;width:1px;height:15px;background:#c2d6ea;"></div>
<div style="left:1112px;top:400px;width:1px;height:15px;background:#c2d6ea;"></div>
<div style="left:1137px;top:400px;width:1px;height:15px;background:#c2d6ea;"></div>
<div style="left:1192px;top:400px;width:1px;height:15px;background:#c2d6ea;"></div>
<div style="left:1247px;top:400px;width:1px;height:15px;background:#c2d6ea;"></div>
<div style="left:1312px;top:400px;width:1px;height:15px;background:#c2d6ea;"></div>
<div style="left:1367px;top:400px;width:1px;height:15px;background:#c2d6ea;"></div>
<div style="left:1392px;top:400px;width:1px;height:15px;background:#c2d6ea;"></div>
<div style="left:1452px;top:400px;width:1px;height:15px;background:#c2d6ea;"></div>
<div style="left:1527px;top:400px;width:1px;height:15px;background:#c2d6ea;"></div>
<span class="t" style="top:400.00px;font-size:11px;line-height:14px;color:#000;letter-spacing:-0.345px;left:396.5px;">Las Vegas(NV)</span>
<span class="t" style="top:400.00px;font-size:11px;line-height:14px;color:#000;letter-spacing:-0.010px;left:472px;">Monte Carlo Resort a...</span>
<span class="t" style="top:400.00px;font-size:11px;line-height:14px;color:#000;letter-spacing:-0.094px;left:592px;">4star</span>
<span class="t" style="top:400.00px;font-size:11px;line-height:14px;color:#000;letter-spacing:-0.392px;left:632px;">Room Only</span>
<span class="t" style="top:400.00px;font-size:11px;line-height:14px;color:#000;letter-spacing:-0.145px;left:707px;">Spa Suite (dou...</span>
<span class="t" style="top:400.00px;font-size:11px;line-height:14px;color:#000;letter-spacing:-0.339px;left:797px;">Sat</span>
<span class="t" style="top:400.00px;font-size:11px;line-height:14px;color:#000;letter-spacing:0.094px;left:831.5px;">23/09/2017</span>
<span class="t" style="top:400.00px;font-size:11px;line-height:14px;color:#000;letter-spacing:-0.307px;left:900px;">Wed</span>
<span class="t" style="top:400.00px;font-size:11px;line-height:14px;color:#000;letter-spacing:0.094px;left:935px;">27/09/2017</span>
<span class="t" style="top:400.00px;font-size:11px;line-height:14px;color:#000;letter-spacing:-0.160px;left:1002.5px;">Bonotel</span>
<span class="t" style="top:400.00px;font-size:11px;line-height:14px;color:#000;letter-spacing:-0.026px;left:1156.00px;">607.28</span>
<span class="t" style="top:400.00px;font-size:11px;line-height:14px;color:#000;letter-spacing:-0.026px;left:1211.00px;">303.64</span>
<span class="t" style="top:400.00px;font-size:11px;line-height:14px;color:#000;letter-spacing:0.084px;left:1266.00px;">1,665.70</span>
<span class="t" style="top:400.00px;font-size:11px;line-height:14px;color:#000;letter-spacing:0.020px;left:1343.00px;">0.00</span>
<span class="t" style="top:400.00px;font-size:11px;line-height:14px;color:#000;letter-spacing:-1.042px;left:1394.5px;">XML</span>
<div style="left:394px;top:415px;width:1134px;height:15px;background:#bcdefe;"></div>
<div style="left:394px;top:429px;width:1134px;height:1px;background:#c0d8f0;"></div>
<div style="left:1528px;top:429px;width:36px;height:1px;background:#c8c8c8;"></div>
<div style="left:469px;top:415px;width:1px;height:15px;background:#c2d6ea;"></div>
<div style="left:590px;top:415px;width:1px;height:15px;background:#c2d6ea;"></div>
<div style="left:629px;top:415px;width:1px;height:15px;background:#c2d6ea;"></div>
<div style="left:704px;top:415px;width:1px;height:15px;background:#c2d6ea;"></div>
<div style="left:794px;top:415px;width:1px;height:15px;background:#c2d6ea;"></div>
<div style="left:829px;top:415px;width:1px;height:15px;background:#c2d6ea;"></div>
<div style="left:897px;top:415px;width:1px;height:15px;background:#c2d6ea;"></div>
<div style="left:932px;top:415px;width:1px;height:15px;background:#c2d6ea;"></div>
<div style="left:1000px;top:415px;width:1px;height:15px;background:#c2d6ea;"></div>
<div style="left:1062px;top:415px;width:1px;height:15px;background:#c2d6ea;"></div>
<div style="left:1087px;top:415px;width:1px;height:15px;background:#c2d6ea;"></div>
<div style="left:1112px;top:415px;width:1px;height:15px;background:#c2d6ea;"></div>
<div style="left:1137px;top:415px;width:1px;height:15px;background:#c2d6ea;"></div>
<div style="left:1192px;top:415px;width:1px;height:15px;background:#c2d6ea;"></div>
<div style="left:1247px;top:415px;width:1px;height:15px;background:#c2d6ea;"></div>
<div style="left:1312px;top:415px;width:1px;height:15px;background:#c2d6ea;"></div>
<div style="left:1367px;top:415px;width:1px;height:15px;background:#c2d6ea;"></div>
<div style="left:1392px;top:415px;width:1px;height:15px;background:#c2d6ea;"></div>
<div style="left:1452px;top:415px;width:1px;height:15px;background:#c2d6ea;"></div>
<div style="left:1527px;top:415px;width:1px;height:15px;background:#c2d6ea;"></div>
<span class="t" style="top:415.00px;font-size:11px;line-height:14px;color:#000;letter-spacing:-0.345px;left:396.5px;">Las Vegas(NV)</span>
<span class="t" style="top:415.00px;font-size:11px;line-height:14px;color:#000;letter-spacing:-0.220px;left:472px;">Monte Carlo</span>
<span class="t" style="top:415.00px;font-size:11px;line-height:14px;color:#000;letter-spacing:-0.194px;left:592px;">4 Stars</span>
<span class="t" style="top:415.00px;font-size:11px;line-height:14px;color:#000;letter-spacing:-0.449px;left:632px;">None</span>
<span class="t" style="top:415.00px;font-size:11px;line-height:14px;color:#000;letter-spacing:-0.159px;left:707px;">Spa Suite</span>
<span class="t" style="top:415.00px;font-size:11px;line-height:14px;color:#000;letter-spacing:-0.339px;left:797px;">Sat</span>
<span class="t" style="top:415.00px;font-size:11px;line-height:14px;color:#000;letter-spacing:0.094px;left:831.5px;">23/09/2017</span>
<span class="t" style="top:415.00px;font-size:11px;line-height:14px;color:#000;letter-spacing:-0.307px;left:900px;">Wed</span>
<span class="t" style="top:415.00px;font-size:11px;line-height:14px;color:#000;letter-spacing:0.094px;left:935px;">27/09/2017</span>
<span class="t" style="top:415.00px;font-size:11px;line-height:14px;color:#000;letter-spacing:-0.218px;left:1002.5px;">GTA</span>
<span class="t" style="top:415.00px;font-size:11px;line-height:14px;color:#000;letter-spacing:-0.026px;left:1156.00px;">614.51</span>
<span class="t" style="top:415.00px;font-size:11px;line-height:14px;color:#000;letter-spacing:-0.026px;left:1211.00px;">307.26</span>
<span class="t" style="top:415.00px;font-size:11px;line-height:14px;color:#000;letter-spacing:0.084px;left:1266.00px;">1,672.93</span>
<span class="t" style="top:415.00px;font-size:11px;line-height:14px;color:#000;letter-spacing:0.020px;left:1343.00px;">0.00</span>
<span class="t" style="top:415.00px;font-size:11px;line-height:14px;color:#000;letter-spacing:-1.042px;left:1394.5px;">XML</span>
<div style="left:394px;top:430px;width:1134px;height:15px;background:#bcdefe;"></div>
<div style="left:394px;top:444px;width:1134px;height:1px;background:#d0d4d8;"></div>
<div style="left:1528px;top:444px;width:36px;height:1px;background:#c8c8c8;"></div>
<div style="left:469px;top:430px;width:1px;height:15px;background:#c2d6ea;"></div>
<div style="left:590px;top:430px;width:1px;height:15px;background:#c2d6ea;"></div>
<div style="left:629px;top:430px;width:1px;height:15px;background:#c2d6ea;"></div>
<div style="left:704px;top:430px;width:1px;height:15px;background:#c2d6ea;"></div>
<div style="left:794px;top:430px;width:1px;height:15px;background:#c2d6ea;"></div>
<div style="left:829px;top:430px;width:1px;height:15px;background:#c2d6ea;"></div>
<div style="left:897px;top:430px;width:1px;height:15px;background:#c2d6ea;"></div>
<div style="left:932px;top:430px;width:1px;height:15px;background:#c2d6ea;"></div>
<div style="left:1000px;top:430px;width:1px;height:15px;background:#c2d6ea;"></div>
<div style="left:1062px;top:430px;width:1px;height:15px;background:#c2d6ea;"></div>
<div style="left:1087px;top:430px;width:1px;height:15px;background:#c2d6ea;"></div>
<div style="left:1112px;top:430px;width:1px;height:15px;background:#c2d6ea;"></div>
<div style="left:1137px;top:430px;width:1px;height:15px;background:#c2d6ea;"></div>
<div style="left:1192px;top:430px;width:1px;height:15px;background:#c2d6ea;"></div>
<div style="left:1247px;top:430px;width:1px;height:15px;background:#c2d6ea;"></div>
<div style="left:1312px;top:430px;width:1px;height:15px;background:#c2d6ea;"></div>
<div style="left:1367px;top:430px;width:1px;height:15px;background:#c2d6ea;"></div>
<div style="left:1392px;top:430px;width:1px;height:15px;background:#c2d6ea;"></div>
<div style="left:1452px;top:430px;width:1px;height:15px;background:#c2d6ea;"></div>
<div style="left:1527px;top:430px;width:1px;height:15px;background:#c2d6ea;"></div>
<span class="t" style="top:430.00px;font-size:11px;line-height:14px;color:#000;letter-spacing:0.007px;left:396.5px;">Las Vegas T...</span>
<span class="t" style="top:430.00px;font-size:11px;line-height:14px;color:#000;letter-spacing:-0.027px;left:472px;">Monte Carlo Resort ...</span>
<span class="t" style="top:430.00px;font-size:11px;line-height:14px;color:#000;letter-spacing:0.068px;left:592px;">4.0</span>
<span class="t" style="top:430.00px;font-size:11px;line-height:14px;color:#000;letter-spacing:-0.392px;left:632px;">Room Only</span>
<span class="t" style="top:430.00px;font-size:11px;line-height:14px;color:#000;letter-spacing:-0.320px;left:707px;">Spa Suite Double</span>
<span class="t" style="top:430.00px;font-size:11px;line-height:14px;color:#000;letter-spacing:-0.339px;left:797px;">Sat</span>
<span class="t" style="top:430.00px;font-size:11px;line-height:14px;color:#000;letter-spacing:0.094px;left:831.5px;">23/09/2017</span>
<span class="t" style="top:430.00px;font-size:11px;line-height:14px;color:#000;letter-spacing:-0.307px;left:900px;">Wed</span>
<span class="t" style="top:430.00px;font-size:11px;line-height:14px;color:#000;letter-spacing:0.094px;left:935px;">27/09/2017</span>
<span class="t" style="top:430.00px;font-size:11px;line-height:14px;color:#000;letter-spacing:-0.165px;left:1002.5px;">Get A Bed</span>
<span class="t" style="top:430.00px;font-size:12px;line-height:16px;color:#000;letter-spacing:-0.140px;left:1072.23px;">*</span>
<span class="t" style="top:430.00px;font-size:11px;line-height:14px;color:#000;letter-spacing:-0.026px;left:1156.00px;">639.61</span>
<span class="t" style="top:430.00px;font-size:11px;line-height:14px;color:#000;letter-spacing:-0.026px;left:1211.00px;">319.81</span>
<span class="t" style="top:430.00px;font-size:11px;line-height:14px;color:#000;letter-spacing:0.084px;left:1266.00px;">1,698.03</span>
<span class="t" style="top:430.00px;font-size:11px;line-height:14px;color:#000;letter-spacing:0.020px;left:1343.00px;">0.00</span>
<span class="t" style="top:430.00px;font-size:11px;line-height:14px;color:#000;letter-spacing:-1.042px;left:1394.5px;">XML</span>
<span class="t" style="top:770.00px;font-size:11px;line-height:14px;color:#000;letter-spacing:0.019px;left:397.5px;">First portion: 5.9 sec, total search time: 8.1 sec</span>
<div style="left:1551px;top:766px;width:14px;height:22px;background:#d4d0c8;border-left:1px solid #fff;border-top:1px solid #fff;border-bottom:1px solid #404040;"></div>
<div style="left:1552px;top:786px;width:13px;height:1px;background:#808080;"></div>
<span class="t" style="top:766.00px;font-size:17px;line-height:21px;color:#10286c;font-weight:bold;-webkit-text-stroke:0.3px #10286c;font-family:'Liberation Serif',serif;left:1559.5px;transform:scaleX(1.0000);transform-origin:0 0;text-shadow:0 0 2px #8ccaff,0 0 1px #8ccaff;">i</span>
<div style="left:391px;top:793px;width:1173px;height:1px;background:#8c8c8c;"></div>
<div style="left:391px;top:794px;width:52px;height:18px;background:#d4d0c8;"></div>
<div style="left:442px;top:794px;width:1px;height:18px;background:#8c8c8c;"></div>
<span class="t" style="top:795.00px;font-size:11px;line-height:14px;color:#000;letter-spacing:-0.509px;left:394px;">Summary</span>
<div style="left:443px;top:794px;width:41px;height:18px;background:#d4d0c8;"></div>
<div style="left:483px;top:794px;width:1px;height:18px;background:#8c8c8c;"></div>
<span class="t" style="top:795.00px;font-size:11px;line-height:14px;color:#000;letter-spacing:-0.393px;left:446px;">Search</span>
<div style="left:484px;top:794px;width:66px;height:18px;background:#c3ffc3;"></div>
<div style="left:549px;top:794px;width:1px;height:18px;background:#8c8c8c;"></div>
<span class="t" style="top:795.00px;font-size:11px;line-height:14px;color:#000;letter-spacing:-0.475px;left:487px;">Acc 2A ORD</span>
<div style="left:550px;top:794px;width:108px;height:18px;background:#c3ffc3;"></div>
<div style="left:657px;top:794px;width:1px;height:18px;background:#8c8c8c;"></div>
<span class="t" style="top:795.00px;font-size:11px;line-height:14px;color:#000;letter-spacing:-0.283px;left:553px;">Acc 2A St Louis (MO)</span>
<div style="left:658px;top:794px;width:112px;height:18px;background:#c0c0ff;"></div>
<div style="left:769px;top:794px;width:1px;height:18px;background:#8c8c8c;"></div>
<span class="t" style="top:795.00px;font-size:11px;line-height:14px;color:#000;letter-spacing:-0.205px;left:661px;">Acc 2A Oklahoma C...</span>
<div style="left:770px;top:794px;width:105px;height:18px;background:#c0c0ff;"></div>
<div style="left:874px;top:794px;width:1px;height:18px;background:#8c8c8c;"></div>
<span class="t" style="top:795.00px;font-size:11px;line-height:14px;color:#000;letter-spacing:-0.243px;left:773px;">Acc 2A Amarillo (TX)</span>
<div style="left:875px;top:794px;width:111px;height:18px;background:#c0c0ff;"></div>
<div style="left:985px;top:794px;width:1px;height:18px;background:#8c8c8c;"></div>
<span class="t" style="top:795.00px;font-size:11px;line-height:14px;color:#000;letter-spacing:-0.032px;left:878px;">Acc 2A Albuquerqu...</span>
<div style="left:986px;top:794px;width:105px;height:18px;background:#c0c0ff;"></div>
<div style="left:1090px;top:794px;width:1px;height:18px;background:#8c8c8c;"></div>
<span class="t" style="top:795.00px;font-size:11px;line-height:14px;color:#000;letter-spacing:-0.237px;left:989px;">Acc 2A Phoenix (AZ)</span>
<div style="left:1091px;top:794px;width:72px;height:18px;background:#c3ffc3;"></div>
<div style="left:1162px;top:794px;width:1px;height:18px;background:#8c8c8c;"></div>
<span class="t" style="top:795.00px;font-size:11px;line-height:14px;color:#000;letter-spacing:-0.598px;left:1094px;">Car ORD LAS</span>
<div style="left:1163px;top:794px;width:61px;height:18px;background:#000080;"></div>
<div style="left:1223px;top:794px;width:1px;height:18px;background:#8c8c8c;"></div>
<span class="t" style="top:795.00px;font-size:11px;line-height:14px;color:#fff;letter-spacing:-0.509px;left:1166px;">Acc 2A LAS</span>
<div style="left:1224px;top:794px;width:96px;height:18px;background:#d4d0c8;"></div>
<div style="left:1319px;top:794px;width:1px;height:18px;background:#8c8c8c;"></div>
<span class="t" style="top:795.00px;font-size:11px;line-height:14px;color:#000;letter-spacing:-0.391px;left:1227px;">Financial Summary</span>
<span class="t" style="top:818.50px;font-size:11px;line-height:14px;color:#000;letter-spacing:-0.031px;left:788px;">User: 409 - Ian May</span>
<span class="t" style="top:818.50px;font-size:11px;line-height:14px;color:#000;letter-spacing:-0.095px;left:895px;">Retailer: &#x27;Ocean California&#x27;</span>
<span class="t" style="top:818.50px;font-size:11px;line-height:14px;color:#000;letter-spacing:-0.102px;left:1033.5px;">Client: none</span>
<span class="t" style="top:818.50px;font-size:11px;line-height:14px;color:#000;letter-spacing:0.042px;left:1530px;">20:02 0</span>
<div style="left:0px;top:846px;width:1564px;height:1px;background:#404040;"></div>
<div style="left:0px;top:847px;width:1564px;height:1px;background:#6c6c6c;"></div>
<div style="left:0px;top:848px;width:1564px;height:35px;background:#d4d0c8;"></div>
<div style="left:0px;top:848px;width:45px;height:35px;background:#d4d0c8;border-right:1px solid #404040;"></div>
<div style="left:43px;top:848px;width:1px;height:35px;background:#808080;"></div>
<svg style="left:-6px;top:858px;" width="17" height="15" viewBox="0 0 17 15"><path d="M7.5 1.6 C9 0.6 10.2 1.2 11.4 1.8 L10.4 7 C9.2 6.6 8 6 6.4 7Z" fill="#e8572a"/><path d="M12 2.2 C13.6 3 15 2.4 16.6 1.6 L15.4 7 C14 8 12.4 8.2 11 7.4Z" fill="#6cb83a"/><path d="M6.2 7.8 C7.6 7 9 7.6 10.2 8.2 L9.2 13.2 C8 12.6 6.8 12.2 5.2 13.2Z" fill="#3a9ae0"/><path d="M10.8 8.4 C12.4 9.2 13.8 9 15.2 8 L14.2 13.2 C12.8 14.2 11.4 14.2 10 13.6Z" fill="#f8c42a"/></svg>
<span class="t" style="top:860.00px;font-size:11px;line-height:14px;color:#000;font-weight:bold;-webkit-text-stroke:0.3px #000;left:12.5px;transform:scaleX(1.0973);transform-origin:0 0;">Start</span>
<div style="left:12px;top:851px;width:31px;height:32px;border:1px dotted #000;"></div>
<div style="left:54px;top:849px;width:159px;height:34px;background:#d4d0c8;border-left:1px solid #fff;border-top:1px solid #fff;border-right:1px solid #404040;"></div>
<div style="left:58px;top:851px;width:32px;height:32px;background:#fff;"></div>
<svg style="left:60px;top:857px;" width="30" height="22" viewBox="0 0 30 22"><defs><linearGradient id="ag" x1="0.1" y1="0" x2="0.75" y2="1"><stop offset="0" stop-color="#fdd62a"/><stop offset="0.3" stop-color="#f9a51e"/><stop offset="0.58" stop-color="#ea6a18"/><stop offset="0.85" stop-color="#c8380e"/><stop offset="1" stop-color="#a82a0a"/></linearGradient></defs><path d="M4.5 1 L12 0.6 L28.6 5.6 L27 8.4 L16 20.6 L13.6 20.6 L0.4 7Z" fill="url(#ag)"/><path d="M4.5 1 L12 0.6 L17 2.2 L8 7 L0.4 7Z" fill="#fee35a" opacity="0.7"/><path d="M28.6 5.6 L27 8.4 L16 20.6 L20 10Z" fill="#c8401a" opacity="0.55"/></svg>
<span class="t" style="top:860.00px;font-size:11px;line-height:14px;color:#000;letter-spacing:0.135px;left:93.5px;">Interactive - Ocean-F...</span>
<div style="left:213px;top:848px;width:160px;height:35px;background:#fff;border-left:2px solid #404040;border-top:1px solid #404040;border-right:1px solid #fff;"></div>
<svg style="left:219px;top:857px;" width="30" height="22" viewBox="0 0 30 22"><defs><linearGradient id="ag" x1="0.1" y1="0" x2="0.75" y2="1"><stop offset="0" stop-color="#fdd62a"/><stop offset="0.3" stop-color="#f9a51e"/><stop offset="0.58" stop-color="#ea6a18"/><stop offset="0.85" stop-color="#c8380e"/><stop offset="1" stop-color="#a82a0a"/></linearGradient></defs><path d="M4.5 1 L12 0.6 L28.6 5.6 L27 8.4 L16 20.6 L13.6 20.6 L0.4 7Z" fill="url(#ag)"/><path d="M4.5 1 L12 0.6 L17 2.2 L8 7 L0.4 7Z" fill="#fee35a" opacity="0.7"/><path d="M28.6 5.6 L27 8.4 L16 20.6 L20 10Z" fill="#c8401a" opacity="0.55"/></svg>
<span class="t" style="top:860.00px;font-size:11px;line-height:14px;color:#000;font-weight:bold;-webkit-text-stroke:0.3px #000;left:253px;transform:scaleX(1.1259);transform-origin:0 0;">Interactive [2] - O...</span>
<div style="left:1399px;top:849px;width:1px;height:34px;background:#aeaaa2;"></div>
<div style="left:1400px;top:849px;width:1px;height:34px;background:#fff;"></div>
<svg style="left:1406px;top:859px;" width="17" height="16" viewBox="0 0 17 16"><rect x="0.6" y="1" width="6.4" height="6.6" fill="#f0a028"/><rect x="1.4" y="1" width="3" height="3" fill="#f8c840"/><rect x="7" y="1" width="8.6" height="6.6" fill="#1c74b4"/><rect x="8.6" y="2" width="5" height="2.4" fill="#2a9ad0"/><rect x="0.6" y="7.6" width="8" height="7" fill="#2e9a3c"/><rect x="8" y="7.6" width="7.6" height="7" fill="#d63a1c"/><rect x="9" y="8.4" width="3.6" height="3" fill="#f06a2a"/></svg>
<svg style="left:1429px;top:861px;" width="18" height="12" viewBox="0 0 18 12"><rect x="1.2" y="1.6" width="12.4" height="6.6" fill="#72d644" stroke="#2e8e20" stroke-width="1.1"/><rect x="2.4" y="2.8" width="6" height="2.4" fill="#a4ec7c"/><rect x="10.6" y="2.4" width="2.2" height="2" fill="#0a1a0a"/><path d="M14.6 0.6 v9.8 M14.6 1.1 h2.4 M14.6 4.2 h1.8 M14.6 7.2 h1.8" stroke="#050805" stroke-width="1.3" fill="none"/><path d="M4.6 8.6 v1.6 M6.6 8.6 v1.6 M8.6 8.6 v1.6 M10.6 8.6 v1.6" stroke="#9ada4a" stroke-width="1"/></svg>
<svg style="left:1453px;top:858px;" width="18" height="18" viewBox="0 0 18 18"><rect x="6.2" y="3" width="11" height="10.2" fill="#fff"/><rect x="7.6" y="4.4" width="8.2" height="7.2" fill="#b2b2b8"/><rect x="7.4" y="13.2" width="9.4" height="3.6" fill="#fff"/><path d="M8 14.4 h8.2" stroke="#505050" stroke-width="0.9"/><path d="M2 1.2 v5.6 h4.4 v-5.6" stroke="#fff" stroke-width="3" fill="none" stroke-linejoin="round"/><path d="M4.2 7 v9.6" stroke="#fff" stroke-width="2.6"/><path d="M2 1.4 v5.2 h4.4 v-5.2" stroke="#484848" stroke-width="0.9" fill="none"/><path d="M3.6 7 v9.4" stroke="#303030" stroke-width="0.9"/></svg>
<svg style="left:1477px;top:859px;" width="18" height="17" viewBox="0 0 18 17"><path d="M1.2 4.6 h2.8 L8.4 1 v12.6 L4 10 H1.2Z" fill="#fbfbfb" stroke="#a0a0a0" stroke-width="0.9"/><circle cx="12.2" cy="11" r="4.4" fill="#e23040"/><circle cx="12.2" cy="11" r="3.2" fill="none" stroke="#f4a0a8" stroke-width="0.6" stroke-dasharray="1 1"/><path d="M10.4 9.2 l3.6 3.6 M14 9.2 l-3.6 3.6" stroke="#fff" stroke-width="1.5"/></svg>
<span class="t" style="top:851.00px;font-size:11px;line-height:14px;color:#000;letter-spacing:0.094px;left:1521.00px;">20:02</span>
<span class="t" style="top:867.50px;font-size:11px;line-height:14px;color:#000;letter-spacing:0.144px;left:1507.25px;">04/07/2016</span>
</div></body></html>
